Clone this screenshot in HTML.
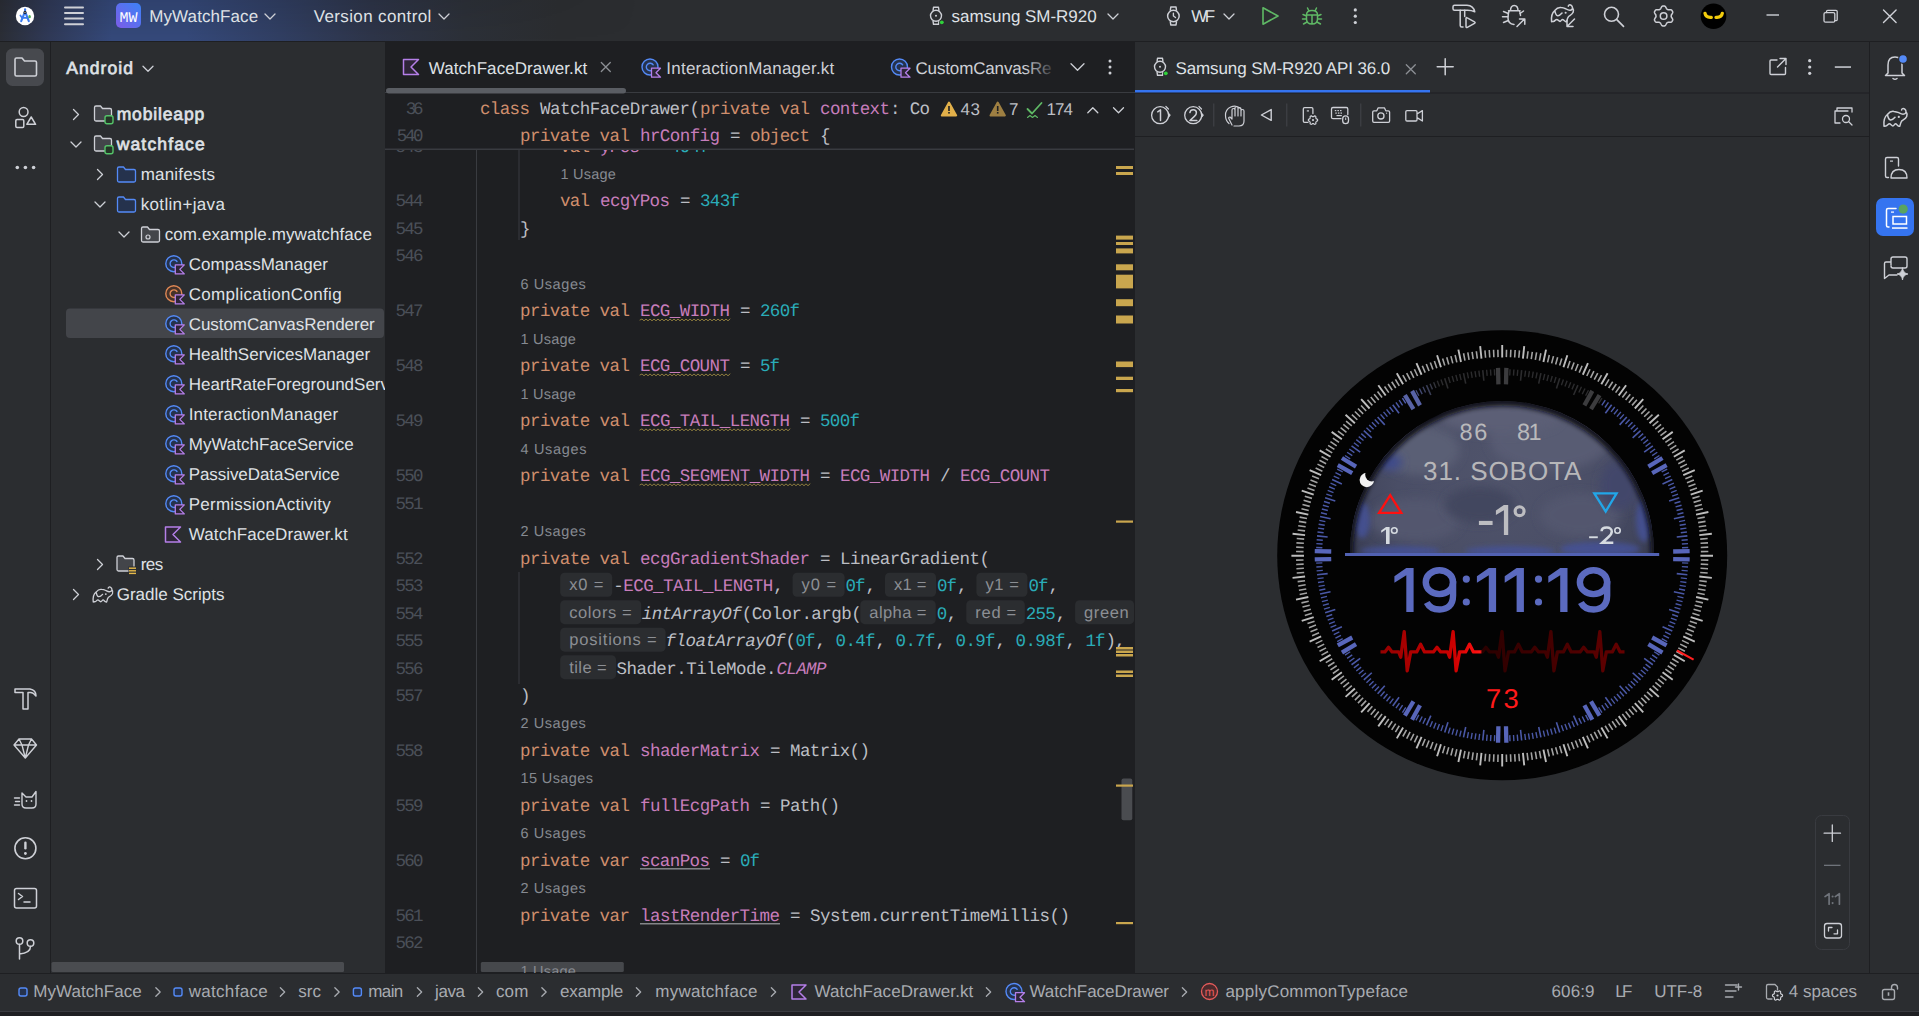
<!DOCTYPE html>
<html><head><meta charset="utf-8"><title>Android Studio</title>
<style>html,body{margin:0;padding:0;background:#2b2d30;overflow:hidden}
#app{position:relative;width:1919px;height:1016px;overflow:hidden}
svg{position:absolute;left:0;top:0;display:block}</style></head>
<body><div id="app"><svg width="1919" height="1016" viewBox="0 0 1919 1016" text-rendering="geometricPrecision">
<defs><linearGradient id="tbg" x1="0" y1="0" x2="620" y2="0" gradientUnits="userSpaceOnUse"><stop offset="0" stop-color="#2b2e36"/><stop offset="0.08" stop-color="#303a58"/><stop offset="0.18" stop-color="#35497a"/><stop offset="0.3" stop-color="#35497a"/><stop offset="0.45" stop-color="#313f63"/><stop offset="0.6" stop-color="#2e3549"/><stop offset="0.75" stop-color="#2c3038"/><stop offset="0.9" stop-color="#2b2d30"/></linearGradient><linearGradient id="tbv" x1="0" y1="0" x2="0" y2="1"><stop offset="0" stop-color="#000" stop-opacity="0.10"/><stop offset="1" stop-color="#000" stop-opacity="0"/></linearGradient><clipPath id="edclip"><rect x="385" y="150" width="750" height="823"/></clipPath><clipPath id="treeclip"><rect x="51" y="42" width="334" height="931"/></clipPath></defs>
<rect x="0" y="0" width="1919" height="1016" fill="#2b2d30" />
<rect x="0" y="0" width="1919" height="41" fill="url(#tbg)" />
<defs><linearGradient id="tbm" x1="0" y1="0" x2="640" y2="0" gradientUnits="userSpaceOnUse"><stop offset="0.6" stop-color="#fff"/><stop offset="1" stop-color="#000"/></linearGradient><mask id="tbmask"><rect x="0" y="0" width="640" height="41" fill="url(#tbm)"/></mask></defs>
<rect x="0" y="0" width="640" height="41" fill="url(#tbv)" mask="url(#tbmask)"/>
<rect x="0" y="41" width="1919" height="1" fill="#1e1f22" />
<rect x="50" y="42" width="1" height="931" fill="#1e1f22" />
<rect x="385" y="42" width="750" height="931" fill="#1e1f22" />
<rect x="1869" y="42" width="1" height="931" fill="#1e1f22" />
<rect x="0" y="973" width="1919" height="1" fill="#1e1f22" />
<rect x="0" y="1011" width="1919" height="1" fill="#393b40" />
<rect x="0" y="1012" width="1919" height="4" fill="#1e1f22" />
<circle cx="25" cy="16" r="9.2" fill="#ffffff"/>
<rect x="24" y="8.3" width="2.1" height="3" rx="1" fill="#3d7cf0"/>
<path d="M24.3 13.5 L21.2 21.2 M25.8 13.5 L28.8 21.2" stroke="#3b7bef" fill="none" stroke-width="2.1" stroke-linecap="round" stroke-linejoin="round" />
<path d="M20.4 15.4 L22.2 17.9 L27.8 17.9" stroke="#3b7bef" fill="none" stroke-width="1.7" stroke-linecap="round" stroke-linejoin="round" />
<circle cx="25" cy="12.4" r="1.6" fill="#1d2430"/><circle cx="25" cy="12.5" r="0.6" fill="#dddddd"/>
<ellipse cx="29.6" cy="16.7" rx="1.3" ry="1.6" fill="#4caf50"/>
<rect x="64" y="6.5" width="20" height="2" rx="1" fill="#ced0d6"/>
<rect x="64" y="12" width="20" height="2" rx="1" fill="#ced0d6"/>
<rect x="64" y="17.5" width="20" height="2" rx="1" fill="#ced0d6"/>
<rect x="64" y="23.3" width="20" height="2" rx="1" fill="#ced0d6"/>
<defs><linearGradient id="mwg" x1="1" y1="0" x2="0" y2="1"><stop offset="0" stop-color="#3b82f6"/><stop offset="1" stop-color="#7c5ce8"/></linearGradient></defs>
<rect x="116" y="3" width="25" height="25" rx="5" fill="url(#mwg)"/>
<text x="119.50" y="22.00" font-family="Liberation Mono" font-size="15" fill="#ffffff" textLength="18.00" lengthAdjust="spacing" >MW</text>
<g transform="translate(936 15.8) scale(1.0)"><circle cx="0" cy="0" r="5.5" fill="none" stroke="#ced0d6" stroke-width="1.4"/><path d="M-3 -5 L-2.5 -8.5 L2.5 -8.5 L3 -5 M-3 5 L-2.5 8.5 L2.5 8.5 L3 5" fill="none" stroke="#ced0d6" stroke-width="1.4" stroke-linejoin="round"/><circle cx="0" cy="0" r="1" fill="#ced0d6"/></g>
<circle cx="941.8" cy="22.3" r="2.6" fill="#2b2d30"/><circle cx="941.8" cy="22.3" r="1.9" fill="#2fd13a"/>
<g transform="translate(1173.4 16) scale(1.05)"><circle cx="0" cy="0" r="5.5" fill="none" stroke="#ced0d6" stroke-width="1.4"/><path d="M-3 -5 L-2.5 -8.5 L2.5 -8.5 L3 -5 M-3 5 L-2.5 8.5 L2.5 8.5 L3 5" fill="none" stroke="#ced0d6" stroke-width="1.4" stroke-linejoin="round"/><path d="M0 -2.8 L0 0 L2 1.5" fill="none" stroke="#ced0d6" stroke-width="1.3" stroke-linecap="round"/></g>
<path d="M1263 7.8 L1278 16 L1263 24.2 Z" stroke="#5fb865" fill="none" stroke-width="1.6" stroke-linecap="round" stroke-linejoin="round" />
<g transform="translate(1312 16) scale(1.0)"><path d="M-5.5 -1 Q-5.5 -5.5 0 -5.5 Q5.5 -5.5 5.5 -1 L5.5 3 Q5.5 8 0 8 Q-5.5 8 -5.5 3 Z M-3 -5 L-4.5 -8 M3 -5 L4.5 -8 M-5.5 0 L-9 -1.5 M5.5 0 L9 -1.5 M-5.5 3 L-9.5 3 M5.5 3 L9.5 3 M-5 6 L-8.5 8 M5 6 L8.5 8 M0 -1 L0 8 M-5.5 -1 L5.5 -1" fill="none" stroke="#5fb865" stroke-width="1.5" stroke-linecap="round" stroke-linejoin="round"/></g>
<circle cx="1355.3" cy="9.899999999999999" r="1.6" fill="#ced0d6"/>
<circle cx="1355.3" cy="16.2" r="1.6" fill="#ced0d6"/>
<circle cx="1355.3" cy="22.5" r="1.6" fill="#ced0d6"/>
<path d="M1454.5 5.2 L1467 5.2 Q1473.5 5.5 1474.8 11.8 Q1471.5 10.3 1467.5 10.3 L1454.5 10.3 Q1453 10.3 1453 8.8 L1453 6.7 Q1453 5.2 1454.5 5.2 Z" stroke="#ced0d6" fill="none" stroke-width="1.5" stroke-linecap="round" stroke-linejoin="round" />
<path d="M1460.2 10.3 L1460.2 25.5 Q1460.2 27 1461.7 27 L1463 27 M1464.7 10.3 L1464.7 16.5" stroke="#ced0d6" fill="none" stroke-width="1.5" stroke-linecap="round" stroke-linejoin="round" />
<path d="M1466 18.5 Q1466 17 1467.3 17.8 L1474.5 21.8 Q1475.8 22.5 1474.5 23.3 L1467.3 27.3 Q1466 28 1466 26.5 Z" stroke="#ced0d6" fill="none" stroke-width="1.5" stroke-linecap="round" stroke-linejoin="round" />
<path d="M1510.5 10.8 Q1510.5 5.5 1514.2 5.5 Q1518 5.5 1518 10.8 M1508.5 10.8 L1520 10.8 M1509 11 Q1508 14 1508 18 Q1508 24 1514 24.5 M1519.5 11 Q1520.5 13 1520.5 15.5" stroke="#ced0d6" fill="none" stroke-width="1.5" stroke-linecap="round" stroke-linejoin="round" />
<path d="M1503.5 11.5 L1508.3 13.5 M1502.5 16.8 L1507.8 16.8 M1503.5 22.5 L1508.3 20.5 M1523.5 11 L1520 13.5" stroke="#ced0d6" fill="none" stroke-width="1.5" stroke-linecap="round" stroke-linejoin="round" />
<path d="M1517 26.5 L1524.5 19 M1519.5 19 L1524.8 19 L1524.8 24.3" stroke="#ced0d6" fill="none" stroke-width="1.5" stroke-linecap="round" stroke-linejoin="round" />
<defs><clipPath id="gsclip"><path d="M1540 0 L1600 0 L1600 18 L1578 18 L1566 30 L1540 30 Z"/></clipPath></defs>
<g clip-path="url(#gsclip)">
<g transform="translate(1562.5 13.3) scale(0.95)"><path d="M-11.5 8.8 C-12 4 -10.5 -1 -8.1 -2.9 C-6 -5.5 -3 -6.3 -1.5 -6 C1 -5.8 2 -5.3 3.6 -4.6 C5.5 -3.6 7 -3 8.1 -3.3 C9.5 -3.5 10.8 -4.5 10.5 -6 C10.3 -8 8.5 -9.2 7.1 -8.8 C6.5 -8.6 6.1 -8 6.1 -7.4 M10.5 -6 C11.5 -4.5 11.8 -2.5 11.2 -1 C10.5 1 8 2.2 6.4 3.3 C5.2 4.5 4.8 6.5 4.3 8.8 L3.5 8.8 C2 8.5 1 6.4 0.2 6.4 C-1 6.4 -1.5 8.5 -2.6 8.5 C-4 8.5 -4.8 6.4 -6 6.4 C-7.5 6.4 -8 8.5 -9.5 8.5 L-11.5 8.8 M-8.1 -2.9 C-7.5 0 -6.8 1.9 -5.5 2.4 C-4 3 -2 1.5 -0.5 -0.2" fill="none" stroke="#ced0d6" stroke-width="1.58" stroke-linejoin="round" stroke-linecap="round"/><circle cx="3.3" cy="-0.5" r="1.1" fill="#ced0d6"/></g>
</g>
<path d="M1574.5 19 L1567.5 26 M1567 20.5 L1567 26.5 L1573 26.5" stroke="#ced0d6" fill="none" stroke-width="1.5" stroke-linecap="round" stroke-linejoin="round" />
<circle cx="1611.5" cy="14.3" r="7" fill="none" stroke="#ced0d6" stroke-width="1.6"/>
<path d="M1616.8 19.6 L1623.5 26.3" stroke="#ced0d6" fill="none" stroke-width="1.7" stroke-linecap="round" stroke-linejoin="round" />
<path d="M1663.60 6.00 L1664.12 6.01 L1664.65 6.05 L1665.13 6.34 L1665.55 6.84 L1665.90 7.40 L1666.21 7.98 L1666.47 8.51 L1666.73 8.97 L1667.10 9.14 L1667.45 9.33 L1667.79 9.54 L1668.13 9.77 L1668.65 9.77 L1669.25 9.73 L1669.89 9.71 L1670.56 9.73 L1671.20 9.84 L1671.69 10.12 L1671.99 10.55 L1672.26 11.00 L1672.51 11.46 L1672.74 11.93 L1672.73 12.49 L1672.51 13.11 L1672.20 13.70 L1671.85 14.25 L1671.52 14.75 L1671.26 15.20 L1671.29 15.60 L1671.30 16.00 L1671.29 16.40 L1671.26 16.80 L1671.52 17.25 L1671.85 17.75 L1672.20 18.30 L1672.51 18.89 L1672.73 19.51 L1672.74 20.07 L1672.51 20.54 L1672.26 21.00 L1671.99 21.45 L1671.69 21.88 L1671.20 22.16 L1670.56 22.27 L1669.89 22.29 L1669.25 22.27 L1668.65 22.23 L1668.13 22.23 L1667.79 22.46 L1667.45 22.67 L1667.10 22.86 L1666.73 23.03 L1666.47 23.49 L1666.21 24.02 L1665.90 24.60 L1665.55 25.16 L1665.13 25.66 L1664.65 25.95 L1664.12 25.99 L1663.60 26.00 L1663.08 25.99 L1662.55 25.95 L1662.07 25.66 L1661.65 25.16 L1661.30 24.60 L1660.99 24.02 L1660.73 23.49 L1660.47 23.03 L1660.10 22.86 L1659.75 22.67 L1659.41 22.46 L1659.07 22.23 L1658.55 22.23 L1657.95 22.27 L1657.31 22.29 L1656.64 22.27 L1656.00 22.16 L1655.51 21.88 L1655.21 21.45 L1654.94 21.00 L1654.69 20.54 L1654.46 20.07 L1654.47 19.51 L1654.69 18.89 L1655.00 18.30 L1655.35 17.75 L1655.68 17.25 L1655.94 16.80 L1655.91 16.40 L1655.90 16.00 L1655.91 15.60 L1655.94 15.20 L1655.68 14.75 L1655.35 14.25 L1655.00 13.70 L1654.69 13.11 L1654.47 12.49 L1654.46 11.93 L1654.69 11.46 L1654.94 11.00 L1655.21 10.55 L1655.51 10.12 L1656.00 9.84 L1656.64 9.73 L1657.31 9.71 L1657.95 9.73 L1658.55 9.77 L1659.07 9.77 L1659.41 9.54 L1659.75 9.33 L1660.10 9.14 L1660.47 8.97 L1660.73 8.51 L1660.99 7.98 L1661.30 7.40 L1661.65 6.84 L1662.07 6.34 L1662.55 6.05 L1663.08 6.01 Z" fill="none" stroke="#ced0d6" stroke-width="1.5" stroke-linejoin="round"/>
<circle cx="1663.6" cy="16" r="3.3" fill="none" stroke="#ced0d6" stroke-width="1.5"/>
<circle cx="1713.5" cy="16.2" r="12.8" fill="#000"/>
<path d="M1705 13.3 Q1705.8 17.8 1711.3 17.3" stroke="#f2cc0c" fill="none" stroke-width="3.3" stroke-linecap="round" stroke-linejoin="round" />
<path d="M1722.3 13.3 Q1721.5 17.8 1716 17.3" stroke="#f2cc0c" fill="none" stroke-width="3.3" stroke-linecap="round" stroke-linejoin="round" />
<rect x="1766.5" y="14.3" width="12.5" height="1.4" fill="#ced0d6" />
<path d="M1826.5 12.5 L1826.5 11.5 Q1826.5 10.3 1827.7 10.3 L1836 10.3 Q1837.2 10.3 1837.2 11.5 L1837.2 19.5 Q1837.2 20.7 1836 20.7 L1835 20.7" stroke="#ced0d6" fill="none" stroke-width="1.3" stroke-linecap="round" stroke-linejoin="round" />
<rect x="1824" y="12.6" width="10.8" height="9.6" rx="1.5" fill="none" stroke="#ced0d6" stroke-width="1.3"/>
<path d="M1883.5 9.899999999999999 L1896.1 22.5 M1896.1 9.899999999999999 L1883.5 22.5" stroke="#ced0d6" fill="none" stroke-width="1.4" stroke-linecap="round" stroke-linejoin="round" />
<text x="149.30" y="22.30" font-family="Liberation Sans" font-size="17" fill="#dfe1e5" textLength="108.80" lengthAdjust="spacing" >MyWatchFace</text>
<path d="M265 14.0 L270 19.0 L275 14.0" stroke="#ced0d6" fill="none" stroke-width="1.3" stroke-linecap="round" stroke-linejoin="round" />
<text x="313.70" y="22.30" font-family="Liberation Sans" font-size="17" fill="#dfe1e5" textLength="117.60" lengthAdjust="spacing" >Version control</text>
<path d="M439 14.0 L444 19.0 L449 14.0" stroke="#ced0d6" fill="none" stroke-width="1.3" stroke-linecap="round" stroke-linejoin="round" />
<text x="951.60" y="22.30" font-family="Liberation Sans" font-size="17" fill="#dfe1e5" textLength="145.00" lengthAdjust="spacing" >samsung SM-R920</text>
<path d="M1108 14.0 L1113 19.0 L1118 14.0" stroke="#ced0d6" fill="none" stroke-width="1.3" stroke-linecap="round" stroke-linejoin="round" />
<text x="1191.20" y="22.30" font-family="Liberation Sans" font-size="17" fill="#dfe1e5" textLength="24.00" lengthAdjust="spacing" >WF</text>
<path d="M1224 14.0 L1229 19.0 L1234 14.0" stroke="#ced0d6" fill="none" stroke-width="1.3" stroke-linecap="round" stroke-linejoin="round" />
<rect x="6" y="48.5" width="38" height="37.5" rx="6.5" fill="#47494e"/>
<path d="M15 59.5 Q15 58 16.5 58 L22 58 L24.5 61 L35 61 Q36.5 61 36.5 62.5 L36.5 74.5 Q36.5 76 35 76 L16.5 76 Q15 76 15 74.5 Z" stroke="#ced0d6" fill="none" stroke-width="1.6" stroke-linecap="round" stroke-linejoin="round" />
<circle cx="23.6" cy="112" r="4.4" fill="none" stroke="#ced0d6" stroke-width="1.5"/>
<rect x="15.8" y="119.6" width="8" height="7.8" rx="1.2" fill="none" stroke="#ced0d6" stroke-width="1.5"/>
<path d="M31.2 117 L35.6 124.3 L26.8 124.3 Z" stroke="#ced0d6" fill="none" stroke-width="1.5" stroke-linecap="round" stroke-linejoin="round" />
<circle cx="17.3" cy="167.5" r="1.8" fill="#ced0d6"/>
<circle cx="25.4" cy="167.5" r="1.8" fill="#ced0d6"/>
<circle cx="33.6" cy="167.5" r="1.8" fill="#ced0d6"/>
<path d="M15 689 L30 689 Q36 690 36 696 Q33 692 30 692.5 L28 692.5 L28 709 L23 709 L23 692.5 L15 692.5 Z" stroke="#ced0d6" fill="none" stroke-width="1.5" stroke-linecap="round" stroke-linejoin="round" />
<path d="M19 739 L31.5 739 L36.5 745 L25.3 758 L14 745 Z M14 745 L36.5 745 M19 739 L22 745 L25.3 758 L28.5 745 L31.5 739" stroke="#ced0d6" fill="none" stroke-width="1.4" stroke-linecap="round" stroke-linejoin="round" />
<path d="M22 793 L26 797 L32 797 L36 791.5 L36 804 Q36 808 32 808 L26 808 Q22 808 22 804 Z M14.5 798 L19.5 798 M15.5 801.5 L19.5 801.5 M14.5 805 L19.5 805" stroke="#ced0d6" fill="none" stroke-width="1.4" stroke-linecap="round" stroke-linejoin="round" />
<circle cx="26.5" cy="801" r="0.9" fill="#ced0d6"/><circle cx="31.5" cy="801" r="0.9" fill="#ced0d6"/>
<circle cx="25.4" cy="848.3" r="10.5" fill="none" stroke="#ced0d6" stroke-width="1.6"/>
<rect x="24.2" y="841.5" width="2.4" height="8" fill="#ced0d6" rx="1.2" />
<circle cx="25.4" cy="853.5" r="1.4" fill="#ced0d6"/>
<rect x="14.5" y="888.5" width="22" height="19.5" rx="2" fill="none" stroke="#ced0d6" stroke-width="1.5"/>
<path d="M18.5 893.5 L22.5 896.5 L18.5 899.5 M24 902 L30 902" stroke="#ced0d6" fill="none" stroke-width="1.5" stroke-linecap="round" stroke-linejoin="round" />
<circle cx="19.5" cy="941" r="3.3" fill="none" stroke="#ced0d6" stroke-width="1.5"/>
<circle cx="30.5" cy="943" r="3.3" fill="none" stroke="#ced0d6" stroke-width="1.5"/>
<path d="M19.5 944.5 L19.5 959 M19.5 954 Q30.5 953 30.5 946.5" stroke="#ced0d6" fill="none" stroke-width="1.5" stroke-linecap="round" stroke-linejoin="round" />
<text x="66.20" y="74.20" font-family="Liberation Sans" font-size="17.5" fill="#dfe1e5" textLength="66.70" lengthAdjust="spacing" stroke="#dfe1e5" stroke-width="0.7">Android</text>
<path d="M143 66.3 L148 71.3 L153 66.3" stroke="#ced0d6" fill="none" stroke-width="1.3" stroke-linecap="round" stroke-linejoin="round" />
<g clip-path="url(#treeclip)">
<rect x="66" y="308.5" width="318" height="29.5" fill="#43454a" rx="4" />
<path d="M73.5 109.5 L78.5 114.5 L73.5 119.5" stroke="#ced0d6" fill="none" stroke-width="1.3" stroke-linecap="round" stroke-linejoin="round" />
<path d="M96.0 106.0 L100.5 106.0 L102.5 108.5 L110.0 108.5 Q111.5 108.5 111.5 110.0 L111.5 119.5 Q111.5 121.0 110.0 121.0 L96.0 121.0 Q94.5 121.0 94.5 119.5 L94.5 107.5 Q94.5 106.0 96.0 106.0 Z" stroke="#ced0d6" fill="#43454a" stroke-width="1.3" stroke-linecap="round" stroke-linejoin="round" />
<rect x="105.0" y="115.7" width="8" height="8" rx="2" fill="#253627" stroke="#55c46a" stroke-width="1.4"/>
<text x="116.70" y="120.00" font-family="Liberation Sans" font-size="17.5" fill="#dfe1e5" textLength="87.50" lengthAdjust="spacing" stroke="#dfe1e5" stroke-width="0.7">mobileapp</text>
<path d="M71 142.0 L76 147.0 L81 142.0" stroke="#ced0d6" fill="none" stroke-width="1.3" stroke-linecap="round" stroke-linejoin="round" />
<path d="M96.0 136.0 L100.5 136.0 L102.5 138.5 L110.0 138.5 Q111.5 138.5 111.5 140.0 L111.5 149.5 Q111.5 151.0 110.0 151.0 L96.0 151.0 Q94.5 151.0 94.5 149.5 L94.5 137.5 Q94.5 136.0 96.0 136.0 Z" stroke="#ced0d6" fill="#43454a" stroke-width="1.3" stroke-linecap="round" stroke-linejoin="round" />
<rect x="105.0" y="145.7" width="8" height="8" rx="2" fill="#253627" stroke="#55c46a" stroke-width="1.4"/>
<text x="116.70" y="150.00" font-family="Liberation Sans" font-size="17.5" fill="#dfe1e5" textLength="88.00" lengthAdjust="spacing" stroke="#dfe1e5" stroke-width="0.7">watchface</text>
<path d="M97.5 169.5 L102.5 174.5 L97.5 179.5" stroke="#ced0d6" fill="none" stroke-width="1.3" stroke-linecap="round" stroke-linejoin="round" />
<path d="M119.0 167.0 L123.5 167.0 L125.5 169.5 L134.0 169.5 Q135.5 169.5 135.5 171.0 L135.5 180.5 Q135.5 182.0 134.0 182.0 L119.0 182.0 Q117.5 182.0 117.5 180.5 L117.5 168.5 Q117.5 167.0 119.0 167.0 Z" stroke="#548af7" fill="#25324d" stroke-width="1.3" stroke-linecap="round" stroke-linejoin="round" />
<text x="140.70" y="180.00" font-family="Liberation Sans" font-size="17" fill="#dfe1e5" textLength="74.20" lengthAdjust="spacing" >manifests</text>
<path d="M95 202.0 L100 207.0 L105 202.0" stroke="#ced0d6" fill="none" stroke-width="1.3" stroke-linecap="round" stroke-linejoin="round" />
<path d="M119.0 197.0 L123.5 197.0 L125.5 199.5 L134.0 199.5 Q135.5 199.5 135.5 201.0 L135.5 210.5 Q135.5 212.0 134.0 212.0 L119.0 212.0 Q117.5 212.0 117.5 210.5 L117.5 198.5 Q117.5 197.0 119.0 197.0 Z" stroke="#548af7" fill="#25324d" stroke-width="1.3" stroke-linecap="round" stroke-linejoin="round" />
<text x="140.70" y="210.00" font-family="Liberation Sans" font-size="17" fill="#dfe1e5" textLength="84.20" lengthAdjust="spacing" >kotlin+java</text>
<path d="M119 232.0 L124 237.0 L129 232.0" stroke="#ced0d6" fill="none" stroke-width="1.3" stroke-linecap="round" stroke-linejoin="round" />
<path d="M143.0 227.0 L147.5 227.0 L149.5 229.5 L158.0 229.5 Q159.5 229.5 159.5 231.0 L159.5 240.5 Q159.5 242.0 158.0 242.0 L143.0 242.0 Q141.5 242.0 141.5 240.5 L141.5 228.5 Q141.5 227.0 143.0 227.0 Z" stroke="#ced0d6" fill="#43454a" stroke-width="1.3" stroke-linecap="round" stroke-linejoin="round" />
<circle cx="148.0" cy="237.0" r="2" fill="none" stroke="#ced0d6" stroke-width="1.2"/>
<text x="164.70" y="240.00" font-family="Liberation Sans" font-size="17" fill="#dfe1e5" textLength="207.20" lengthAdjust="spacing" >com.example.mywatchface</text>
<circle cx="173.8" cy="263.7" r="8" fill="#25324d" stroke="#548af7" stroke-width="1.4"/>
<path d="M177.0 261.5 A3.8 3.8 0 1 0 177.0 265.9" stroke="#548af7" fill="none" stroke-width="1.4" stroke-linecap="round" stroke-linejoin="round" />
<path d="M175.3 264.9 L184.3 264.9 L179.8 269.4 L184.3 273.9 L175.3 273.9 Z" stroke="#b57fe8" fill="#2e2538" stroke-width="1.3" stroke-linecap="round" stroke-linejoin="round" />
<text x="188.70" y="270.00" font-family="Liberation Sans" font-size="17" fill="#dfe1e5" textLength="139.20" lengthAdjust="spacing" >CompassManager</text>
<circle cx="173.8" cy="293.7" r="8" fill="#45322a" stroke="#e08855" stroke-width="1.4"/>
<path d="M177.0 291.5 A3.8 3.8 0 1 0 177.0 295.9" stroke="#e08855" fill="none" stroke-width="1.4" stroke-linecap="round" stroke-linejoin="round" />
<path d="M175.3 294.9 L184.3 294.9 L179.8 299.4 L184.3 303.9 L175.3 303.9 Z" stroke="#b57fe8" fill="#2e2538" stroke-width="1.3" stroke-linecap="round" stroke-linejoin="round" />
<text x="188.70" y="300.00" font-family="Liberation Sans" font-size="17" fill="#dfe1e5" textLength="152.90" lengthAdjust="spacing" >ComplicationConfig</text>
<circle cx="173.8" cy="323.7" r="8" fill="#25324d" stroke="#548af7" stroke-width="1.4"/>
<path d="M177.0 321.5 A3.8 3.8 0 1 0 177.0 325.9" stroke="#548af7" fill="none" stroke-width="1.4" stroke-linecap="round" stroke-linejoin="round" />
<path d="M175.3 324.9 L184.3 324.9 L179.8 329.4 L184.3 333.9 L175.3 333.9 Z" stroke="#b57fe8" fill="#2e2538" stroke-width="1.3" stroke-linecap="round" stroke-linejoin="round" />
<text x="188.70" y="330.00" font-family="Liberation Sans" font-size="17" fill="#dfe1e5" textLength="186.00" lengthAdjust="spacing" >CustomCanvasRenderer</text>
<circle cx="173.8" cy="353.7" r="8" fill="#25324d" stroke="#548af7" stroke-width="1.4"/>
<path d="M177.0 351.5 A3.8 3.8 0 1 0 177.0 355.9" stroke="#548af7" fill="none" stroke-width="1.4" stroke-linecap="round" stroke-linejoin="round" />
<path d="M175.3 354.9 L184.3 354.9 L179.8 359.4 L184.3 363.9 L175.3 363.9 Z" stroke="#b57fe8" fill="#2e2538" stroke-width="1.3" stroke-linecap="round" stroke-linejoin="round" />
<text x="188.70" y="360.00" font-family="Liberation Sans" font-size="17" fill="#dfe1e5" textLength="181.40" lengthAdjust="spacing" >HealthServicesManager</text>
<circle cx="173.8" cy="383.7" r="8" fill="#25324d" stroke="#548af7" stroke-width="1.4"/>
<path d="M177.0 381.5 A3.8 3.8 0 1 0 177.0 385.9" stroke="#548af7" fill="none" stroke-width="1.4" stroke-linecap="round" stroke-linejoin="round" />
<path d="M175.3 384.9 L184.3 384.9 L179.8 389.4 L184.3 393.9 L175.3 393.9 Z" stroke="#b57fe8" fill="#2e2538" stroke-width="1.3" stroke-linecap="round" stroke-linejoin="round" />
<text x="188.70" y="390.00" font-family="Liberation Sans" font-size="17" fill="#dfe1e5" textLength="222.00" lengthAdjust="spacing" >HeartRateForegroundService</text>
<circle cx="173.8" cy="413.7" r="8" fill="#25324d" stroke="#548af7" stroke-width="1.4"/>
<path d="M177.0 411.5 A3.8 3.8 0 1 0 177.0 415.9" stroke="#548af7" fill="none" stroke-width="1.4" stroke-linecap="round" stroke-linejoin="round" />
<path d="M175.3 414.9 L184.3 414.9 L179.8 419.4 L184.3 423.9 L175.3 423.9 Z" stroke="#b57fe8" fill="#2e2538" stroke-width="1.3" stroke-linecap="round" stroke-linejoin="round" />
<text x="188.70" y="420.00" font-family="Liberation Sans" font-size="17" fill="#dfe1e5" textLength="149.40" lengthAdjust="spacing" >InteractionManager</text>
<circle cx="173.8" cy="443.7" r="8" fill="#25324d" stroke="#548af7" stroke-width="1.4"/>
<path d="M177.0 441.5 A3.8 3.8 0 1 0 177.0 445.9" stroke="#548af7" fill="none" stroke-width="1.4" stroke-linecap="round" stroke-linejoin="round" />
<path d="M175.3 444.9 L184.3 444.9 L179.8 449.4 L184.3 453.9 L175.3 453.9 Z" stroke="#b57fe8" fill="#2e2538" stroke-width="1.3" stroke-linecap="round" stroke-linejoin="round" />
<text x="188.70" y="450.00" font-family="Liberation Sans" font-size="17" fill="#dfe1e5" textLength="165.00" lengthAdjust="spacing" >MyWatchFaceService</text>
<circle cx="173.8" cy="473.7" r="8" fill="#25324d" stroke="#548af7" stroke-width="1.4"/>
<path d="M177.0 471.5 A3.8 3.8 0 1 0 177.0 475.9" stroke="#548af7" fill="none" stroke-width="1.4" stroke-linecap="round" stroke-linejoin="round" />
<path d="M175.3 474.9 L184.3 474.9 L179.8 479.4 L184.3 483.9 L175.3 483.9 Z" stroke="#b57fe8" fill="#2e2538" stroke-width="1.3" stroke-linecap="round" stroke-linejoin="round" />
<text x="188.70" y="480.00" font-family="Liberation Sans" font-size="17" fill="#dfe1e5" textLength="151.00" lengthAdjust="spacing" >PassiveDataService</text>
<circle cx="173.8" cy="503.7" r="8" fill="#25324d" stroke="#548af7" stroke-width="1.4"/>
<path d="M177.0 501.5 A3.8 3.8 0 1 0 177.0 505.9" stroke="#548af7" fill="none" stroke-width="1.4" stroke-linecap="round" stroke-linejoin="round" />
<path d="M175.3 504.9 L184.3 504.9 L179.8 509.4 L184.3 513.9 L175.3 513.9 Z" stroke="#b57fe8" fill="#2e2538" stroke-width="1.3" stroke-linecap="round" stroke-linejoin="round" />
<text x="188.70" y="510.00" font-family="Liberation Sans" font-size="17" fill="#dfe1e5" textLength="142.00" lengthAdjust="spacing" >PermissionActivity</text>
<path d="M165.5 527.0 L180.5 527.0 L173.0 534.5 L180.5 542.0 L165.5 542.0 Z" stroke="#b57fe8" fill="#2e2538" stroke-width="1.5" stroke-linecap="round" stroke-linejoin="round" />
<text x="188.70" y="540.00" font-family="Liberation Sans" font-size="17" fill="#dfe1e5" textLength="159.00" lengthAdjust="spacing" >WatchFaceDrawer.kt</text>
<path d="M97.5 559.5 L102.5 564.5 L97.5 569.5" stroke="#ced0d6" fill="none" stroke-width="1.3" stroke-linecap="round" stroke-linejoin="round" />
<path d="M118.5 556.0 L123.0 556.0 L125.0 558.5 L132.5 558.5 Q134.0 558.5 134.0 560.0 L134.0 569.5 Q134.0 571.0 132.5 571.0 L118.5 571.0 Q117.0 571.0 117.0 569.5 L117.0 557.5 Q117.0 556.0 118.5 556.0 Z" stroke="#ced0d6" fill="#43454a" stroke-width="1.3" stroke-linecap="round" stroke-linejoin="round" />
<rect x="128.5" y="566.5" width="8" height="8" fill="#2b2d30"/>
<rect x="129.0" y="567.5" width="7" height="1.4" fill="#e5b94a"/>
<rect x="129.0" y="570.1" width="7" height="1.4" fill="#e5b94a"/>
<rect x="129.0" y="572.7" width="7" height="1.4" fill="#e5b94a"/>
<text x="140.70" y="570.00" font-family="Liberation Sans" font-size="17" fill="#dfe1e5" textLength="22.50" lengthAdjust="spacing" >res</text>
<path d="M73.5 589.5 L78.5 594.5 L73.5 599.5" stroke="#ced0d6" fill="none" stroke-width="1.3" stroke-linecap="round" stroke-linejoin="round" />
<g transform="translate(103.0 594.5) scale(0.85)"><path d="M-11.5 8.8 C-12 4 -10.5 -1 -8.1 -2.9 C-6 -5.5 -3 -6.3 -1.5 -6 C1 -5.8 2 -5.3 3.6 -4.6 C5.5 -3.6 7 -3 8.1 -3.3 C9.5 -3.5 10.8 -4.5 10.5 -6 C10.3 -8 8.5 -9.2 7.1 -8.8 C6.5 -8.6 6.1 -8 6.1 -7.4 M10.5 -6 C11.5 -4.5 11.8 -2.5 11.2 -1 C10.5 1 8 2.2 6.4 3.3 C5.2 4.5 4.8 6.5 4.3 8.8 L3.5 8.8 C2 8.5 1 6.4 0.2 6.4 C-1 6.4 -1.5 8.5 -2.6 8.5 C-4 8.5 -4.8 6.4 -6 6.4 C-7.5 6.4 -8 8.5 -9.5 8.5 L-11.5 8.8 M-8.1 -2.9 C-7.5 0 -6.8 1.9 -5.5 2.4 C-4 3 -2 1.5 -0.5 -0.2" fill="none" stroke="#ced0d6" stroke-width="1.53" stroke-linejoin="round" stroke-linecap="round"/><circle cx="3.3" cy="-0.5" r="1.1" fill="#ced0d6"/></g>
<text x="116.70" y="600.00" font-family="Liberation Sans" font-size="17" fill="#dfe1e5" textLength="107.70" lengthAdjust="spacing" >Gradle Scripts</text>
</g>
<rect x="51.5" y="962" width="292.5" height="10" fill="#4a4c50" rx="1.5" />
<path d="M403.5 59.5 L418.5 59.5 L411.0 67.0 L418.5 74.5 L403.5 74.5 Z" stroke="#b57fe8" fill="#2e2538" stroke-width="1.5" stroke-linecap="round" stroke-linejoin="round" />
<text x="428.70" y="74.30" font-family="Liberation Sans" font-size="17" fill="#dfe1e5" textLength="158.50" lengthAdjust="spacing" >WatchFaceDrawer.kt</text>
<path d="M601.3 62.5 L610.3 71.5 M610.3 62.5 L601.3 71.5" stroke="#8c8f94" fill="none" stroke-width="1.3" stroke-linecap="round" stroke-linejoin="round" />
<circle cx="650" cy="67" r="8" fill="#25324d" stroke="#548af7" stroke-width="1.4"/>
<path d="M653.2 64.8 A3.8 3.8 0 1 0 653.2 69.2" stroke="#548af7" fill="none" stroke-width="1.4" stroke-linecap="round" stroke-linejoin="round" />
<path d="M651.5 68.2 L660.5 68.2 L656.0 72.7 L660.5 77.2 L651.5 77.2 Z" stroke="#b57fe8" fill="#2e2538" stroke-width="1.3" stroke-linecap="round" stroke-linejoin="round" />
<text x="666.30" y="74.30" font-family="Liberation Sans" font-size="17" fill="#ced0d6" textLength="168.00" lengthAdjust="spacing" >InteractionManager.kt</text>
<circle cx="899.5" cy="67" r="8" fill="#25324d" stroke="#548af7" stroke-width="1.4"/>
<path d="M902.7 64.8 A3.8 3.8 0 1 0 902.7 69.2" stroke="#548af7" fill="none" stroke-width="1.4" stroke-linecap="round" stroke-linejoin="round" />
<path d="M901.0 68.2 L910.0 68.2 L905.5 72.7 L910.0 77.2 L901.0 77.2 Z" stroke="#b57fe8" fill="#2e2538" stroke-width="1.3" stroke-linecap="round" stroke-linejoin="round" />
<defs><linearGradient id="fadeTab" x1="0" x2="1"><stop offset="0.8" stop-color="#ced0d6"/><stop offset="1" stop-color="#ced0d6" stop-opacity="0.2"/></linearGradient></defs>
<text x="915.50" y="74.30" font-family="Liberation Sans" font-size="17" fill="url(#fadeTab)" textLength="136.00" lengthAdjust="spacing" >CustomCanvasRe</text>
<path d="M1071.0 63.75 L1077.5 70.25 L1084.0 63.75" stroke="#ced0d6" fill="none" stroke-width="1.3" stroke-linecap="round" stroke-linejoin="round" />
<circle cx="1110" cy="61" r="1.5" fill="#ced0d6"/>
<circle cx="1110" cy="67" r="1.5" fill="#ced0d6"/>
<circle cx="1110" cy="73" r="1.5" fill="#ced0d6"/>
<rect x="385" y="92" width="750" height="1" fill="#393b40" />
<rect x="386" y="88" width="240" height="5.5" fill="#5a5d63" rx="2.75" />
<path d="M949 102.5 L956.2 115.5 L941.8 115.5 Z" stroke="#e2b04a" fill="#e2b04a" stroke-width="2" stroke-linecap="round" stroke-linejoin="round" />
<rect x="948.2" y="106" width="1.6" height="5" fill="#1e1f22" />
<rect x="948.2" y="112" width="1.6" height="1.6" fill="#1e1f22" />
<path d="M997.7 102.5 L1004.9000000000001 115.5 L990.5 115.5 Z" stroke="#9e7f42" fill="#9e7f42" stroke-width="2" stroke-linecap="round" stroke-linejoin="round" />
<rect x="996.9000000000001" y="106" width="1.6" height="5" fill="#1e1f22" />
<rect x="996.9000000000001" y="112" width="1.6" height="1.6" fill="#1e1f22" />
<text x="960.50" y="115.30" font-family="Liberation Sans" font-size="17" fill="#bcbec4" textLength="19.50" lengthAdjust="spacing" >43</text>
<text x="1009.00" y="115.30" font-family="Liberation Sans" font-size="17" fill="#bcbec4" textLength="8.50" lengthAdjust="spacing" >7</text>
<path d="M1027.5 109 L1032 113.5 L1041.5 103" stroke="#5fb865" fill="none" stroke-width="1.8" stroke-linecap="round" stroke-linejoin="round" />
<path d="M1027.5 117.5 L1030 115.5 L1032.5 117.5 L1035 115.5 L1037.5 117.5" stroke="#5fb865" fill="none" stroke-width="1.1" stroke-linecap="round" stroke-linejoin="round" />
<text x="1046.50" y="115.30" font-family="Liberation Sans" font-size="17" fill="#bcbec4" textLength="26.50" lengthAdjust="spacing" >174</text>
<path d="M1087.8 112.8 L1092.8 107.8 L1097.8 112.8" stroke="#ced0d6" fill="none" stroke-width="1.3" stroke-linecap="round" stroke-linejoin="round" />
<path d="M1113.5 107.8 L1118.5 112.8 L1123.5 107.8" stroke="#ced0d6" fill="none" stroke-width="1.3" stroke-linecap="round" stroke-linejoin="round" />
<text x="423.50" y="113.70" font-family="Liberation Mono" font-size="17.5" fill="#4b5059" textLength="17.80" lengthAdjust="spacing" text-anchor="end" >36</text>
<text x="480.00" y="113.90" font-family="Liberation Mono" font-size="17.5" fill="#cf8e6d" textLength="50.00" lengthAdjust="spacing" >class</text>
<text x="540.00" y="113.90" font-family="Liberation Mono" font-size="17.5" fill="#bcbec4" textLength="160.00" lengthAdjust="spacing" >WatchFaceDrawer(</text>
<text x="700.00" y="113.90" font-family="Liberation Mono" font-size="17.5" fill="#cf8e6d" textLength="110.00" lengthAdjust="spacing" >private val</text>
<text x="820.00" y="113.90" font-family="Liberation Mono" font-size="17.5" fill="#c77dbb" textLength="70.00" lengthAdjust="spacing" >context</text>
<text x="890.00" y="113.90" font-family="Liberation Mono" font-size="17.5" fill="#bcbec4" textLength="40.00" lengthAdjust="spacing" >: Co</text>
<text x="423.50" y="141.20" font-family="Liberation Mono" font-size="17.5" fill="#4b5059" textLength="26.70" lengthAdjust="spacing" text-anchor="end" >540</text>
<text x="520.00" y="141.20" font-family="Liberation Mono" font-size="17.5" fill="#cf8e6d" textLength="110.00" lengthAdjust="spacing" >private val</text>
<text x="640.00" y="141.20" font-family="Liberation Mono" font-size="17.5" fill="#c77dbb" textLength="80.00" lengthAdjust="spacing" >hrConfig</text>
<text x="730.00" y="141.20" font-family="Liberation Mono" font-size="17.5" fill="#bcbec4" textLength="10.00" lengthAdjust="spacing" >=</text>
<text x="750.00" y="141.20" font-family="Liberation Mono" font-size="17.5" fill="#cf8e6d" textLength="60.00" lengthAdjust="spacing" >object</text>
<text x="820.00" y="141.20" font-family="Liberation Mono" font-size="17.5" fill="#bcbec4" textLength="10.00" lengthAdjust="spacing" >{</text>
<rect x="385" y="148.5" width="749" height="1.5" fill="#393b40" />
<g clip-path="url(#edclip)">
<rect x="480.8" y="962" width="143" height="10" fill="#46484c" rx="1.5" />
<rect x="476" y="150" width="1" height="823" fill="#393b40" />
<rect x="518.5" y="150" width="1" height="90" fill="#393b40" />
<rect x="518.5" y="572" width="1" height="112" fill="#393b40" />
<text x="423.50" y="151.52" font-family="Liberation Mono" font-size="17.5" fill="#4b5059" textLength="27.90" lengthAdjust="spacing" text-anchor="end" >543</text>
<text x="560.00" y="151.52" font-family="Liberation Mono" font-size="17.5" fill="#cf8e6d" textLength="30.00" lengthAdjust="spacing" >val</text>
<text x="600.00" y="151.52" font-family="Liberation Mono" font-size="17.5" fill="#c77dbb" textLength="40.00" lengthAdjust="spacing" >yPos</text>
<text x="650.00" y="151.52" font-family="Liberation Mono" font-size="17.5" fill="#bcbec4" textLength="10.00" lengthAdjust="spacing" >=</text>
<text x="670.00" y="151.52" font-family="Liberation Mono" font-size="17.5" fill="#2aacb8" textLength="40.00" lengthAdjust="spacing" >404f</text>
<text x="560.50" y="178.80" font-family="Liberation Sans" font-size="14.5" fill="#868a91" textLength="55.40" lengthAdjust="spacing" >1 Usage</text>
<text x="423.50" y="206.48" font-family="Liberation Mono" font-size="17.5" fill="#4b5059" textLength="27.90" lengthAdjust="spacing" text-anchor="end" >544</text>
<text x="560.00" y="206.48" font-family="Liberation Mono" font-size="17.5" fill="#cf8e6d" textLength="30.00" lengthAdjust="spacing" >val</text>
<text x="600.00" y="206.48" font-family="Liberation Mono" font-size="17.5" fill="#c77dbb" textLength="70.00" lengthAdjust="spacing" >ecgYPos</text>
<text x="680.00" y="206.48" font-family="Liberation Mono" font-size="17.5" fill="#bcbec4" textLength="10.00" lengthAdjust="spacing" >=</text>
<text x="700.00" y="206.48" font-family="Liberation Mono" font-size="17.5" fill="#2aacb8" textLength="40.00" lengthAdjust="spacing" >343f</text>
<text x="423.50" y="233.96" font-family="Liberation Mono" font-size="17.5" fill="#4b5059" textLength="27.90" lengthAdjust="spacing" text-anchor="end" >545</text>
<text x="520.00" y="233.96" font-family="Liberation Mono" font-size="17.5" fill="#bcbec4" textLength="10.00" lengthAdjust="spacing" >}</text>
<text x="423.50" y="261.44" font-family="Liberation Mono" font-size="17.5" fill="#4b5059" textLength="27.90" lengthAdjust="spacing" text-anchor="end" >546</text>
<text x="520.50" y="288.72" font-family="Liberation Sans" font-size="14.5" fill="#868a91" textLength="65.30" lengthAdjust="spacing" >6 Usages</text>
<text x="423.50" y="316.40" font-family="Liberation Mono" font-size="17.5" fill="#4b5059" textLength="27.90" lengthAdjust="spacing" text-anchor="end" >547</text>
<text x="520.00" y="316.40" font-family="Liberation Mono" font-size="17.5" fill="#cf8e6d" textLength="110.00" lengthAdjust="spacing" >private val</text>
<text x="640.00" y="316.40" font-family="Liberation Mono" font-size="17.5" fill="#c77dbb" textLength="90.00" lengthAdjust="spacing" >ECG_WIDTH</text>
<path d="M640.0 320.0 L642.0 319.0 L644.0 320.79999999999995 L646.0 319.0 L648.0 320.79999999999995 L650.0 319.0 L652.0 320.79999999999995 L654.0 319.0 L656.0 320.79999999999995 L658.0 319.0 L660.0 320.79999999999995 L662.0 319.0 L664.0 320.79999999999995 L666.0 319.0 L668.0 320.79999999999995 L670.0 319.0 L672.0 320.79999999999995 L674.0 319.0 L676.0 320.79999999999995 L678.0 319.0 L680.0 320.79999999999995 L682.0 319.0 L684.0 320.79999999999995 L686.0 319.0 L688.0 320.79999999999995 L690.0 319.0 L692.0 320.79999999999995 L694.0 319.0 L696.0 320.79999999999995 L698.0 319.0 L700.0 320.79999999999995 L702.0 319.0 L704.0 320.79999999999995 L706.0 319.0 L708.0 320.79999999999995 L710.0 319.0 L712.0 320.79999999999995 L714.0 319.0 L716.0 320.79999999999995 L718.0 319.0 L720.0 320.79999999999995 L722.0 319.0 L724.0 320.79999999999995 L726.0 319.0 L728.0 320.79999999999995 L730.0 319.0" stroke="#8f7e3e" fill="none" stroke-width="1.0" stroke-linecap="round" stroke-linejoin="round" stroke-linecap="butt"/>
<text x="740.00" y="316.40" font-family="Liberation Mono" font-size="17.5" fill="#bcbec4" textLength="10.00" lengthAdjust="spacing" >=</text>
<text x="760.00" y="316.40" font-family="Liberation Mono" font-size="17.5" fill="#2aacb8" textLength="40.00" lengthAdjust="spacing" >260f</text>
<text x="520.50" y="343.68" font-family="Liberation Sans" font-size="14.5" fill="#868a91" textLength="55.40" lengthAdjust="spacing" >1 Usage</text>
<text x="423.50" y="371.36" font-family="Liberation Mono" font-size="17.5" fill="#4b5059" textLength="27.90" lengthAdjust="spacing" text-anchor="end" >548</text>
<text x="520.00" y="371.36" font-family="Liberation Mono" font-size="17.5" fill="#cf8e6d" textLength="110.00" lengthAdjust="spacing" >private val</text>
<text x="640.00" y="371.36" font-family="Liberation Mono" font-size="17.5" fill="#c77dbb" textLength="90.00" lengthAdjust="spacing" >ECG_COUNT</text>
<path d="M640.0 374.96000000000004 L642.0 373.96000000000004 L644.0 375.76 L646.0 373.96000000000004 L648.0 375.76 L650.0 373.96000000000004 L652.0 375.76 L654.0 373.96000000000004 L656.0 375.76 L658.0 373.96000000000004 L660.0 375.76 L662.0 373.96000000000004 L664.0 375.76 L666.0 373.96000000000004 L668.0 375.76 L670.0 373.96000000000004 L672.0 375.76 L674.0 373.96000000000004 L676.0 375.76 L678.0 373.96000000000004 L680.0 375.76 L682.0 373.96000000000004 L684.0 375.76 L686.0 373.96000000000004 L688.0 375.76 L690.0 373.96000000000004 L692.0 375.76 L694.0 373.96000000000004 L696.0 375.76 L698.0 373.96000000000004 L700.0 375.76 L702.0 373.96000000000004 L704.0 375.76 L706.0 373.96000000000004 L708.0 375.76 L710.0 373.96000000000004 L712.0 375.76 L714.0 373.96000000000004 L716.0 375.76 L718.0 373.96000000000004 L720.0 375.76 L722.0 373.96000000000004 L724.0 375.76 L726.0 373.96000000000004 L728.0 375.76 L730.0 373.96000000000004" stroke="#8f7e3e" fill="none" stroke-width="1.0" stroke-linecap="round" stroke-linejoin="round" stroke-linecap="butt"/>
<text x="740.00" y="371.36" font-family="Liberation Mono" font-size="17.5" fill="#bcbec4" textLength="10.00" lengthAdjust="spacing" >=</text>
<text x="760.00" y="371.36" font-family="Liberation Mono" font-size="17.5" fill="#2aacb8" textLength="20.00" lengthAdjust="spacing" >5f</text>
<text x="520.50" y="398.64" font-family="Liberation Sans" font-size="14.5" fill="#868a91" textLength="55.40" lengthAdjust="spacing" >1 Usage</text>
<text x="423.50" y="426.32" font-family="Liberation Mono" font-size="17.5" fill="#4b5059" textLength="27.90" lengthAdjust="spacing" text-anchor="end" >549</text>
<text x="520.00" y="426.32" font-family="Liberation Mono" font-size="17.5" fill="#cf8e6d" textLength="110.00" lengthAdjust="spacing" >private val</text>
<text x="640.00" y="426.32" font-family="Liberation Mono" font-size="17.5" fill="#c77dbb" textLength="150.00" lengthAdjust="spacing" >ECG_TAIL_LENGTH</text>
<path d="M640.0 429.92 L642.0 428.92 L644.0 430.71999999999997 L646.0 428.92 L648.0 430.71999999999997 L650.0 428.92 L652.0 430.71999999999997 L654.0 428.92 L656.0 430.71999999999997 L658.0 428.92 L660.0 430.71999999999997 L662.0 428.92 L664.0 430.71999999999997 L666.0 428.92 L668.0 430.71999999999997 L670.0 428.92 L672.0 430.71999999999997 L674.0 428.92 L676.0 430.71999999999997 L678.0 428.92 L680.0 430.71999999999997 L682.0 428.92 L684.0 430.71999999999997 L686.0 428.92 L688.0 430.71999999999997 L690.0 428.92 L692.0 430.71999999999997 L694.0 428.92 L696.0 430.71999999999997 L698.0 428.92 L700.0 430.71999999999997 L702.0 428.92 L704.0 430.71999999999997 L706.0 428.92 L708.0 430.71999999999997 L710.0 428.92 L712.0 430.71999999999997 L714.0 428.92 L716.0 430.71999999999997 L718.0 428.92 L720.0 430.71999999999997 L722.0 428.92 L724.0 430.71999999999997 L726.0 428.92 L728.0 430.71999999999997 L730.0 428.92 L732.0 430.71999999999997 L734.0 428.92 L736.0 430.71999999999997 L738.0 428.92 L740.0 430.71999999999997 L742.0 428.92 L744.0 430.71999999999997 L746.0 428.92 L748.0 430.71999999999997 L750.0 428.92 L752.0 430.71999999999997 L754.0 428.92 L756.0 430.71999999999997 L758.0 428.92 L760.0 430.71999999999997 L762.0 428.92 L764.0 430.71999999999997 L766.0 428.92 L768.0 430.71999999999997 L770.0 428.92 L772.0 430.71999999999997 L774.0 428.92 L776.0 430.71999999999997 L778.0 428.92 L780.0 430.71999999999997 L782.0 428.92 L784.0 430.71999999999997 L786.0 428.92 L788.0 430.71999999999997 L790.0 428.92" stroke="#8f7e3e" fill="none" stroke-width="1.0" stroke-linecap="round" stroke-linejoin="round" stroke-linecap="butt"/>
<text x="800.00" y="426.32" font-family="Liberation Mono" font-size="17.5" fill="#bcbec4" textLength="10.00" lengthAdjust="spacing" >=</text>
<text x="820.00" y="426.32" font-family="Liberation Mono" font-size="17.5" fill="#2aacb8" textLength="40.00" lengthAdjust="spacing" >500f</text>
<text x="520.50" y="453.60" font-family="Liberation Sans" font-size="14.5" fill="#868a91" textLength="66.00" lengthAdjust="spacing" >4 Usages</text>
<text x="423.50" y="481.28" font-family="Liberation Mono" font-size="17.5" fill="#4b5059" textLength="27.90" lengthAdjust="spacing" text-anchor="end" >550</text>
<text x="520.00" y="481.28" font-family="Liberation Mono" font-size="17.5" fill="#cf8e6d" textLength="110.00" lengthAdjust="spacing" >private val</text>
<text x="640.00" y="481.28" font-family="Liberation Mono" font-size="17.5" fill="#c77dbb" textLength="170.00" lengthAdjust="spacing" >ECG_SEGMENT_WIDTH</text>
<path d="M640.0 484.88000000000005 L642.0 483.88000000000005 L644.0 485.68 L646.0 483.88000000000005 L648.0 485.68 L650.0 483.88000000000005 L652.0 485.68 L654.0 483.88000000000005 L656.0 485.68 L658.0 483.88000000000005 L660.0 485.68 L662.0 483.88000000000005 L664.0 485.68 L666.0 483.88000000000005 L668.0 485.68 L670.0 483.88000000000005 L672.0 485.68 L674.0 483.88000000000005 L676.0 485.68 L678.0 483.88000000000005 L680.0 485.68 L682.0 483.88000000000005 L684.0 485.68 L686.0 483.88000000000005 L688.0 485.68 L690.0 483.88000000000005 L692.0 485.68 L694.0 483.88000000000005 L696.0 485.68 L698.0 483.88000000000005 L700.0 485.68 L702.0 483.88000000000005 L704.0 485.68 L706.0 483.88000000000005 L708.0 485.68 L710.0 483.88000000000005 L712.0 485.68 L714.0 483.88000000000005 L716.0 485.68 L718.0 483.88000000000005 L720.0 485.68 L722.0 483.88000000000005 L724.0 485.68 L726.0 483.88000000000005 L728.0 485.68 L730.0 483.88000000000005 L732.0 485.68 L734.0 483.88000000000005 L736.0 485.68 L738.0 483.88000000000005 L740.0 485.68 L742.0 483.88000000000005 L744.0 485.68 L746.0 483.88000000000005 L748.0 485.68 L750.0 483.88000000000005 L752.0 485.68 L754.0 483.88000000000005 L756.0 485.68 L758.0 483.88000000000005 L760.0 485.68 L762.0 483.88000000000005 L764.0 485.68 L766.0 483.88000000000005 L768.0 485.68 L770.0 483.88000000000005 L772.0 485.68 L774.0 483.88000000000005 L776.0 485.68 L778.0 483.88000000000005 L780.0 485.68 L782.0 483.88000000000005 L784.0 485.68 L786.0 483.88000000000005 L788.0 485.68 L790.0 483.88000000000005 L792.0 485.68 L794.0 483.88000000000005 L796.0 485.68 L798.0 483.88000000000005 L800.0 485.68 L802.0 483.88000000000005 L804.0 485.68 L806.0 483.88000000000005 L808.0 485.68 L810.0 483.88000000000005" stroke="#8f7e3e" fill="none" stroke-width="1.0" stroke-linecap="round" stroke-linejoin="round" stroke-linecap="butt"/>
<text x="820.00" y="481.28" font-family="Liberation Mono" font-size="17.5" fill="#bcbec4" textLength="10.00" lengthAdjust="spacing" >=</text>
<text x="840.00" y="481.28" font-family="Liberation Mono" font-size="17.5" fill="#c77dbb" textLength="90.00" lengthAdjust="spacing" >ECG_WIDTH</text>
<text x="940.00" y="481.28" font-family="Liberation Mono" font-size="17.5" fill="#bcbec4" textLength="10.00" lengthAdjust="spacing" >/</text>
<text x="960.00" y="481.28" font-family="Liberation Mono" font-size="17.5" fill="#c77dbb" textLength="90.00" lengthAdjust="spacing" >ECG_COUNT</text>
<text x="423.50" y="508.76" font-family="Liberation Mono" font-size="17.5" fill="#4b5059" textLength="27.90" lengthAdjust="spacing" text-anchor="end" >551</text>
<text x="520.50" y="536.04" font-family="Liberation Sans" font-size="14.5" fill="#868a91" textLength="65.30" lengthAdjust="spacing" >2 Usages</text>
<text x="423.50" y="563.72" font-family="Liberation Mono" font-size="17.5" fill="#4b5059" textLength="27.90" lengthAdjust="spacing" text-anchor="end" >552</text>
<text x="520.00" y="563.72" font-family="Liberation Mono" font-size="17.5" fill="#cf8e6d" textLength="110.00" lengthAdjust="spacing" >private val</text>
<text x="640.00" y="563.72" font-family="Liberation Mono" font-size="17.5" fill="#c77dbb" textLength="170.00" lengthAdjust="spacing" >ecgGradientShader</text>
<text x="820.00" y="563.72" font-family="Liberation Mono" font-size="17.5" fill="#bcbec4" textLength="10.00" lengthAdjust="spacing" >=</text>
<text x="840.00" y="563.72" font-family="Liberation Mono" font-size="17.5" fill="#bcbec4" textLength="150.00" lengthAdjust="spacing" >LinearGradient(</text>
<text x="423.50" y="591.20" font-family="Liberation Mono" font-size="17.5" fill="#4b5059" textLength="27.90" lengthAdjust="spacing" text-anchor="end" >553</text>
<rect x="560.2" y="572.7" width="52" height="24" rx="4.5" fill="#2b2d30"/>
<text x="569.20" y="590.10" font-family="Liberation Sans" font-size="16.5" fill="#8c8f94" textLength="34.30" lengthAdjust="spacing" >x0 =</text>
<text x="613.20" y="591.20" font-family="Liberation Mono" font-size="17.5" fill="#bcbec4" textLength="10.00" lengthAdjust="spacing" >-</text>
<text x="623.20" y="591.20" font-family="Liberation Mono" font-size="17.5" fill="#c77dbb" textLength="150.00" lengthAdjust="spacing" >ECG_TAIL_LENGTH</text>
<text x="773.20" y="591.20" font-family="Liberation Mono" font-size="17.5" fill="#bcbec4" textLength="10.00" lengthAdjust="spacing" >,</text>
<rect x="792.6" y="572.7" width="52" height="24" rx="4.5" fill="#2b2d30"/>
<text x="801.60" y="590.10" font-family="Liberation Sans" font-size="16.5" fill="#8c8f94" textLength="34.50" lengthAdjust="spacing" >y0 =</text>
<text x="845.60" y="591.20" font-family="Liberation Mono" font-size="17.5" fill="#2aacb8" textLength="20.00" lengthAdjust="spacing" >0f</text>
<text x="865.60" y="591.20" font-family="Liberation Mono" font-size="17.5" fill="#bcbec4" textLength="10.00" lengthAdjust="spacing" >,</text>
<rect x="885" y="572.7" width="51" height="24" rx="4.5" fill="#2b2d30"/>
<text x="894.00" y="590.10" font-family="Liberation Sans" font-size="16.5" fill="#8c8f94" textLength="32.50" lengthAdjust="spacing" >x1 =</text>
<text x="937.00" y="591.20" font-family="Liberation Mono" font-size="17.5" fill="#2aacb8" textLength="20.00" lengthAdjust="spacing" >0f</text>
<text x="957.00" y="591.20" font-family="Liberation Mono" font-size="17.5" fill="#bcbec4" textLength="10.00" lengthAdjust="spacing" >,</text>
<rect x="976.4" y="572.7" width="51" height="24" rx="4.5" fill="#2b2d30"/>
<text x="985.40" y="590.10" font-family="Liberation Sans" font-size="16.5" fill="#8c8f94" textLength="33.50" lengthAdjust="spacing" >y1 =</text>
<text x="1028.40" y="591.20" font-family="Liberation Mono" font-size="17.5" fill="#2aacb8" textLength="20.00" lengthAdjust="spacing" >0f</text>
<text x="1048.40" y="591.20" font-family="Liberation Mono" font-size="17.5" fill="#bcbec4" textLength="10.00" lengthAdjust="spacing" >,</text>
<text x="423.50" y="618.68" font-family="Liberation Mono" font-size="17.5" fill="#4b5059" textLength="27.90" lengthAdjust="spacing" text-anchor="end" >554</text>
<rect x="560.2" y="600.1800000000001" width="81" height="24" rx="4.5" fill="#2b2d30"/>
<text x="569.20" y="617.58" font-family="Liberation Sans" font-size="16.5" fill="#8c8f94" textLength="62.50" lengthAdjust="spacing" >colors =</text>
<text x="641.70" y="618.68" font-family="Liberation Mono" font-size="17.5" fill="#bcbec4" textLength="100.00" lengthAdjust="spacing" font-style="italic" >intArrayOf</text>
<text x="741.70" y="618.68" font-family="Liberation Mono" font-size="17.5" fill="#bcbec4" textLength="120.00" lengthAdjust="spacing" >(Color.argb(</text>
<rect x="860.3" y="600.1800000000001" width="75.4" height="24" rx="4.5" fill="#2b2d30"/>
<text x="869.30" y="617.58" font-family="Liberation Sans" font-size="16.5" fill="#8c8f94" textLength="57.20" lengthAdjust="spacing" >alpha =</text>
<text x="936.70" y="618.68" font-family="Liberation Mono" font-size="17.5" fill="#2aacb8" textLength="10.00" lengthAdjust="spacing" >0</text>
<text x="946.70" y="618.68" font-family="Liberation Mono" font-size="17.5" fill="#bcbec4" textLength="10.00" lengthAdjust="spacing" >,</text>
<rect x="966.3" y="600.1800000000001" width="58.5" height="24" rx="4.5" fill="#2b2d30"/>
<text x="975.30" y="617.58" font-family="Liberation Sans" font-size="16.5" fill="#8c8f94" textLength="40.90" lengthAdjust="spacing" >red =</text>
<text x="1025.80" y="618.68" font-family="Liberation Mono" font-size="17.5" fill="#2aacb8" textLength="30.00" lengthAdjust="spacing" >255</text>
<text x="1055.80" y="618.68" font-family="Liberation Mono" font-size="17.5" fill="#bcbec4" textLength="10.00" lengthAdjust="spacing" >,</text>
<rect x="1075.1" y="600.1800000000001" width="59" height="24" rx="4.5" fill="#2b2d30"/>
<text x="1084.10" y="617.58" font-family="Liberation Sans" font-size="16.5" fill="#8c8f94" textLength="44.50" lengthAdjust="spacing" >green</text>
<text x="423.50" y="646.16" font-family="Liberation Mono" font-size="17.5" fill="#4b5059" textLength="27.90" lengthAdjust="spacing" text-anchor="end" >555</text>
<rect x="560.2" y="627.6600000000001" width="105.4" height="24" rx="4.5" fill="#2b2d30"/>
<text x="569.20" y="645.06" font-family="Liberation Sans" font-size="16.5" fill="#8c8f94" textLength="87.50" lengthAdjust="spacing" >positions =</text>
<text x="665.60" y="646.16" font-family="Liberation Mono" font-size="17.5" fill="#bcbec4" textLength="120.00" lengthAdjust="spacing" font-style="italic" >floatArrayOf</text>
<text x="785.60" y="646.16" font-family="Liberation Mono" font-size="17.5" fill="#bcbec4" textLength="10.00" lengthAdjust="spacing" >(</text>
<text x="795.60" y="646.16" font-family="Liberation Mono" font-size="17.5" fill="#2aacb8" textLength="20.00" lengthAdjust="spacing" >0f</text>
<text x="815.60" y="646.16" font-family="Liberation Mono" font-size="17.5" fill="#bcbec4" textLength="10.00" lengthAdjust="spacing" >,</text>
<text x="835.60" y="646.16" font-family="Liberation Mono" font-size="17.5" fill="#2aacb8" textLength="40.00" lengthAdjust="spacing" >0.4f</text>
<text x="875.60" y="646.16" font-family="Liberation Mono" font-size="17.5" fill="#bcbec4" textLength="10.00" lengthAdjust="spacing" >,</text>
<text x="895.60" y="646.16" font-family="Liberation Mono" font-size="17.5" fill="#2aacb8" textLength="40.00" lengthAdjust="spacing" >0.7f</text>
<text x="935.60" y="646.16" font-family="Liberation Mono" font-size="17.5" fill="#bcbec4" textLength="10.00" lengthAdjust="spacing" >,</text>
<text x="955.60" y="646.16" font-family="Liberation Mono" font-size="17.5" fill="#2aacb8" textLength="40.00" lengthAdjust="spacing" >0.9f</text>
<text x="995.60" y="646.16" font-family="Liberation Mono" font-size="17.5" fill="#bcbec4" textLength="10.00" lengthAdjust="spacing" >,</text>
<text x="1015.60" y="646.16" font-family="Liberation Mono" font-size="17.5" fill="#2aacb8" textLength="50.00" lengthAdjust="spacing" >0.98f</text>
<text x="1065.60" y="646.16" font-family="Liberation Mono" font-size="17.5" fill="#bcbec4" textLength="10.00" lengthAdjust="spacing" >,</text>
<text x="1085.60" y="646.16" font-family="Liberation Mono" font-size="17.5" fill="#2aacb8" textLength="20.00" lengthAdjust="spacing" >1f</text>
<text x="1105.60" y="646.16" font-family="Liberation Mono" font-size="17.5" fill="#bcbec4" textLength="20.00" lengthAdjust="spacing" >),</text>
<text x="423.50" y="673.64" font-family="Liberation Mono" font-size="17.5" fill="#4b5059" textLength="27.90" lengthAdjust="spacing" text-anchor="end" >556</text>
<rect x="560.2" y="655.14" width="55.8" height="24" rx="4.5" fill="#2b2d30"/>
<text x="569.20" y="672.54" font-family="Liberation Sans" font-size="16.5" fill="#8c8f94" textLength="37.50" lengthAdjust="spacing" >tile =</text>
<text x="616.50" y="673.64" font-family="Liberation Mono" font-size="17.5" fill="#bcbec4" textLength="160.00" lengthAdjust="spacing" >Shader.TileMode.</text>
<text x="776.50" y="673.64" font-family="Liberation Mono" font-size="17.5" fill="#c77dbb" textLength="50.00" lengthAdjust="spacing" font-style="italic" >CLAMP</text>
<text x="423.50" y="701.12" font-family="Liberation Mono" font-size="17.5" fill="#4b5059" textLength="27.90" lengthAdjust="spacing" text-anchor="end" >557</text>
<text x="520.00" y="701.12" font-family="Liberation Mono" font-size="17.5" fill="#bcbec4" textLength="10.00" lengthAdjust="spacing" >)</text>
<text x="520.50" y="728.40" font-family="Liberation Sans" font-size="14.5" fill="#868a91" textLength="65.30" lengthAdjust="spacing" >2 Usages</text>
<text x="423.50" y="756.08" font-family="Liberation Mono" font-size="17.5" fill="#4b5059" textLength="27.90" lengthAdjust="spacing" text-anchor="end" >558</text>
<text x="520.00" y="756.08" font-family="Liberation Mono" font-size="17.5" fill="#cf8e6d" textLength="110.00" lengthAdjust="spacing" >private val</text>
<text x="640.00" y="756.08" font-family="Liberation Mono" font-size="17.5" fill="#c77dbb" textLength="120.00" lengthAdjust="spacing" >shaderMatrix</text>
<text x="770.00" y="756.08" font-family="Liberation Mono" font-size="17.5" fill="#bcbec4" textLength="10.00" lengthAdjust="spacing" >=</text>
<text x="790.00" y="756.08" font-family="Liberation Mono" font-size="17.5" fill="#bcbec4" textLength="80.00" lengthAdjust="spacing" >Matrix()</text>
<text x="520.50" y="783.36" font-family="Liberation Sans" font-size="14.5" fill="#868a91" textLength="72.50" lengthAdjust="spacing" >15 Usages</text>
<text x="423.50" y="811.04" font-family="Liberation Mono" font-size="17.5" fill="#4b5059" textLength="27.90" lengthAdjust="spacing" text-anchor="end" >559</text>
<text x="520.00" y="811.04" font-family="Liberation Mono" font-size="17.5" fill="#cf8e6d" textLength="110.00" lengthAdjust="spacing" >private val</text>
<text x="640.00" y="811.04" font-family="Liberation Mono" font-size="17.5" fill="#c77dbb" textLength="110.00" lengthAdjust="spacing" >fullEcgPath</text>
<text x="760.00" y="811.04" font-family="Liberation Mono" font-size="17.5" fill="#bcbec4" textLength="10.00" lengthAdjust="spacing" >=</text>
<text x="780.00" y="811.04" font-family="Liberation Mono" font-size="17.5" fill="#bcbec4" textLength="60.00" lengthAdjust="spacing" >Path()</text>
<text x="520.50" y="838.32" font-family="Liberation Sans" font-size="14.5" fill="#868a91" textLength="65.30" lengthAdjust="spacing" >6 Usages</text>
<text x="423.50" y="866.00" font-family="Liberation Mono" font-size="17.5" fill="#4b5059" textLength="27.90" lengthAdjust="spacing" text-anchor="end" >560</text>
<text x="520.00" y="866.00" font-family="Liberation Mono" font-size="17.5" fill="#cf8e6d" textLength="110.00" lengthAdjust="spacing" >private var</text>
<text x="640.00" y="866.00" font-family="Liberation Mono" font-size="17.5" fill="#c77dbb" textLength="70.00" lengthAdjust="spacing" >scanPos</text>
<rect x="640.0" y="868.3" width="70.0" height="1.1" fill="#a9abb0" />
<text x="720.00" y="866.00" font-family="Liberation Mono" font-size="17.5" fill="#bcbec4" textLength="10.00" lengthAdjust="spacing" >=</text>
<text x="740.00" y="866.00" font-family="Liberation Mono" font-size="17.5" fill="#2aacb8" textLength="20.00" lengthAdjust="spacing" >0f</text>
<text x="520.50" y="893.28" font-family="Liberation Sans" font-size="14.5" fill="#868a91" textLength="65.30" lengthAdjust="spacing" >2 Usages</text>
<text x="423.50" y="920.96" font-family="Liberation Mono" font-size="17.5" fill="#4b5059" textLength="27.90" lengthAdjust="spacing" text-anchor="end" >561</text>
<text x="520.00" y="920.96" font-family="Liberation Mono" font-size="17.5" fill="#cf8e6d" textLength="110.00" lengthAdjust="spacing" >private var</text>
<text x="640.00" y="920.96" font-family="Liberation Mono" font-size="17.5" fill="#c77dbb" textLength="140.00" lengthAdjust="spacing" >lastRenderTime</text>
<rect x="640.0" y="923.26" width="140.0" height="1.1" fill="#a9abb0" />
<text x="790.00" y="920.96" font-family="Liberation Mono" font-size="17.5" fill="#bcbec4" textLength="10.00" lengthAdjust="spacing" >=</text>
<text x="810.00" y="920.96" font-family="Liberation Mono" font-size="17.5" fill="#bcbec4" textLength="260.00" lengthAdjust="spacing" >System.currentTimeMillis()</text>
<text x="423.50" y="948.44" font-family="Liberation Mono" font-size="17.5" fill="#4b5059" textLength="27.90" lengthAdjust="spacing" text-anchor="end" >562</text>
<text x="520.50" y="975.72" font-family="Liberation Sans" font-size="14.5" fill="#868a91" textLength="55.40" lengthAdjust="spacing" >1 Usage</text>
</g>
<rect x="1121.5" y="778.4" width="10.8" height="41.8" fill="#4a4c50" rx="2" />
<rect x="1116" y="166" width="17" height="3" fill="#c9a64e" />
<rect x="1116" y="172" width="17" height="3" fill="#c9a64e" />
<rect x="1116" y="235.6" width="17" height="4" fill="#c9a64e" />
<rect x="1116" y="242" width="17" height="3" fill="#c9a64e" />
<rect x="1116" y="248.4" width="17" height="5" fill="#c9a64e" />
<rect x="1116" y="264.3" width="17" height="6" fill="#c9a64e" />
<rect x="1116" y="274.7" width="17" height="13.7" fill="#c9a64e" />
<rect x="1116" y="299.2" width="17" height="7" fill="#c9a64e" />
<rect x="1116" y="315.5" width="17" height="8" fill="#c9a64e" />
<rect x="1116" y="361.5" width="17" height="5.6" fill="#c9a64e" />
<rect x="1116" y="376.7" width="17" height="3.3" fill="#c9a64e" />
<rect x="1116" y="389" width="17" height="3.2" fill="#c9a64e" />
<rect x="1116" y="520.5" width="17" height="2.2" fill="#c9a64e" />
<rect x="1116" y="647" width="17" height="2.5" fill="#c9a64e" />
<rect x="1116" y="650.5" width="17" height="2.5" fill="#c9a64e" />
<rect x="1116" y="654" width="17" height="2.5" fill="#c9a64e" />
<rect x="1116" y="670.5" width="17" height="2.5" fill="#c9a64e" />
<rect x="1116" y="674.5" width="17" height="2.5" fill="#c9a64e" />
<rect x="1116" y="784.5" width="17" height="2.2" fill="#c9a64e" />
<rect x="1116" y="922" width="17" height="2.2" fill="#c9a64e" />
<g transform="translate(1160 66.8) scale(1.0)"><circle cx="0" cy="0" r="5.5" fill="none" stroke="#ced0d6" stroke-width="1.4"/><path d="M-3 -5 L-2.5 -8.5 L2.5 -8.5 L3 -5 M-3 5 L-2.5 8.5 L2.5 8.5 L3 5" fill="none" stroke="#ced0d6" stroke-width="1.4" stroke-linejoin="round"/><circle cx="0" cy="0" r="1" fill="#ced0d6"/></g>
<circle cx="1165.8" cy="73.3" r="2.6" fill="#2b2d30"/><circle cx="1165.8" cy="73.3" r="1.9" fill="#2fd13a"/>
<path d="M1406.3 64.7 L1415.3 73.7 M1415.3 64.7 L1406.3 73.7" stroke="#8c8f94" fill="none" stroke-width="1.3" stroke-linecap="round" stroke-linejoin="round" />
<path d="M1437.2 66.7 L1453.2 66.7 M1445.2 58.7 L1445.2 74.7" stroke="#ced0d6" fill="none" stroke-width="1.5" stroke-linecap="round" stroke-linejoin="round" />
<path d="M1777 60 L1771 60 Q1770 60 1770 61 L1770 73.5 Q1770 74.5 1771 74.5 L1784.5 74.5 Q1785.5 74.5 1785.5 73.5 L1785.5 67.5 M1777.5 67 L1786 58.5 M1780 58.5 L1786 58.5 L1786 64.5" stroke="#ced0d6" fill="none" stroke-width="1.4" stroke-linecap="round" stroke-linejoin="round" />
<circle cx="1809.7" cy="60.7" r="1.6" fill="#ced0d6"/>
<circle cx="1809.7" cy="67" r="1.6" fill="#ced0d6"/>
<circle cx="1809.7" cy="73.3" r="1.6" fill="#ced0d6"/>
<rect x="1834.8" y="66.3" width="16.2" height="1.5" fill="#ced0d6" />
<circle cx="1160.1" cy="115.2" r="8.5" fill="none" stroke="#ced0d6" stroke-width="1.3"/>
<path d="M1168.3 113.0 L1170.1 115.2 L1168.3 117.4" stroke="#ced0d6" fill="#ced0d6" stroke-width="1.1" stroke-linecap="round" stroke-linejoin="round" />
<path d="M1165.8999999999999 106.5 L1168.3999999999999 109.0" stroke="#ced0d6" fill="none" stroke-width="1.2" stroke-linecap="round" stroke-linejoin="round" />
<path d="M1157.6999999999998 111.8 L1160.5 109.9 L1160.5 120.5" stroke="#ced0d6" fill="none" stroke-width="1.5" stroke-linecap="round" stroke-linejoin="round" />
<circle cx="1193.2" cy="115.2" r="8.5" fill="none" stroke="#ced0d6" stroke-width="1.3"/>
<path d="M1201.4 113.0 L1203.2 115.2 L1201.4 117.4" stroke="#ced0d6" fill="#ced0d6" stroke-width="1.1" stroke-linecap="round" stroke-linejoin="round" />
<path d="M1199.0 106.5 L1201.5 109.0" stroke="#ced0d6" fill="none" stroke-width="1.2" stroke-linecap="round" stroke-linejoin="round" />
<path d="M1189.9 112.60000000000001 Q1190.4 109.8 1193.2 109.8 Q1196.4 109.8 1196.4 112.7 Q1196.4 114.60000000000001 1194.4 116.4 L1189.9 120.5 L1196.8 120.5" stroke="#ced0d6" fill="none" stroke-width="1.5" stroke-linecap="round" stroke-linejoin="round" stroke-linejoin="miter"/>
<rect x="1213.3" y="103.5" width="1" height="23" fill="#43454a" />
<rect x="1286.3" y="103.5" width="1" height="23" fill="#43454a" />
<rect x="1360.3" y="103.5" width="1" height="23" fill="#43454a" />
<path d="M1229 123.5 Q1225.5 120.5 1225.5 115.5 A9 9 0 0 1 1240.5 108.5 M1232 125 L1229 119 Q1228 117 1230 117 L1232 119 L1232 110 Q1232 108.5 1233.5 108.5 Q1235 108.5 1235 110 L1235 116 L1235 108 Q1235 106.5 1236.5 106.5 Q1238 106.5 1238 108 L1238 116 L1238 109 Q1238 107.5 1239.5 107.5 Q1241 107.5 1241 109 L1241 116 L1241 111 Q1241 109.5 1242.5 109.5 Q1244 109.5 1244 111 L1244 121 Q1244 126 1239 126 L1234 126" stroke="#ced0d6" fill="none" stroke-width="1.2" stroke-linecap="round" stroke-linejoin="round" />
<path d="M1271.2 109.6 L1271.2 120.4 L1261.4 115 Z" stroke="#ced0d6" fill="none" stroke-width="1.4" stroke-linecap="round" stroke-linejoin="round" />
<path d="M1308 122.3 L1304.6 122.3 Q1303.3 122.3 1303.3 121 L1303.3 108.9 Q1303.3 107.6 1304.6 107.6 L1311.6 107.6 Q1312.9 107.6 1312.9 108.9 L1312.9 113.5" stroke="#ced0d6" fill="none" stroke-width="1.3" stroke-linecap="round" stroke-linejoin="round" />
<rect x="1306.8" y="110.3" width="2.2" height="1.2" fill="#ced0d6" />
<path d="M1317.60 120.10 L1317.59 120.40 L1317.56 120.70 L1317.30 120.96 L1316.91 121.15 L1316.52 121.29 L1316.23 121.44 L1316.14 121.65 L1316.03 121.85 L1315.91 122.04 L1315.78 122.23 L1315.79 122.55 L1315.86 122.96 L1315.89 123.40 L1315.80 123.75 L1315.56 123.92 L1315.30 124.08 L1315.03 124.23 L1314.76 124.35 L1314.41 124.25 L1314.05 124.01 L1313.72 123.74 L1313.46 123.57 L1313.23 123.59 L1313.00 123.60 L1312.77 123.59 L1312.54 123.57 L1312.28 123.74 L1311.95 124.01 L1311.59 124.25 L1311.24 124.35 L1310.97 124.23 L1310.70 124.08 L1310.44 123.92 L1310.20 123.75 L1310.11 123.40 L1310.14 122.96 L1310.21 122.55 L1310.22 122.23 L1310.09 122.04 L1309.97 121.85 L1309.86 121.65 L1309.77 121.44 L1309.48 121.29 L1309.09 121.15 L1308.70 120.96 L1308.44 120.70 L1308.41 120.40 L1308.40 120.10 L1308.41 119.80 L1308.44 119.50 L1308.70 119.24 L1309.09 119.05 L1309.48 118.91 L1309.77 118.76 L1309.86 118.55 L1309.97 118.35 L1310.09 118.16 L1310.22 117.97 L1310.21 117.65 L1310.14 117.24 L1310.11 116.80 L1310.20 116.45 L1310.44 116.28 L1310.70 116.12 L1310.97 115.97 L1311.24 115.85 L1311.59 115.95 L1311.95 116.19 L1312.28 116.46 L1312.54 116.63 L1312.77 116.61 L1313.00 116.60 L1313.23 116.61 L1313.46 116.63 L1313.72 116.46 L1314.05 116.19 L1314.41 115.95 L1314.76 115.85 L1315.03 115.97 L1315.30 116.12 L1315.56 116.28 L1315.80 116.45 L1315.89 116.80 L1315.86 117.24 L1315.79 117.65 L1315.78 117.97 L1315.91 118.16 L1316.03 118.35 L1316.14 118.55 L1316.23 118.76 L1316.52 118.91 L1316.91 119.05 L1317.30 119.24 L1317.56 119.50 L1317.59 119.80 Z" fill="#2b2d30" stroke="#ced0d6" stroke-width="1.2" stroke-linejoin="round"/>
<circle cx="1313" cy="120.1" r="1.1" fill="#ced0d6"/>
<path d="M1341 118.7 L1333 118.7 Q1331.5 118.7 1331.5 117.2 L1331.5 109 Q1331.5 107.5 1333 107.5 L1346.3 107.5 Q1347.8 107.5 1347.8 109 L1347.8 114.5" stroke="#ced0d6" fill="none" stroke-width="1.3" stroke-linecap="round" stroke-linejoin="round" />
<rect x="1334.8" y="110" width="1.5" height="1.2" fill="#ced0d6" />
<rect x="1337.3999999999999" y="110" width="1.5" height="1.2" fill="#ced0d6" />
<rect x="1340.0" y="110" width="1.5" height="1.2" fill="#ced0d6" />
<rect x="1335.3" y="112.5" width="1.5" height="1.2" fill="#ced0d6" />
<rect x="1337.8999999999999" y="112.5" width="1.5" height="1.2" fill="#ced0d6" />
<rect x="1340.5" y="112.5" width="1.5" height="1.2" fill="#ced0d6" />
<rect x="1336.5" y="115" width="5.3" height="1.2" fill="#ced0d6" />
<rect x="1342.7" y="115.8" width="5.8" height="7.8" rx="2.9" fill="#2b2d30" stroke="#ced0d6" stroke-width="1.3"/>
<rect x="1345.2" y="117.5" width="1" height="2.5" fill="#ced0d6" />
<path d="M1374 110.8 L1376.8 110.8 L1378.2 107.8 L1384.4 107.8 L1385.8 110.8 L1388.3 110.8 Q1389.6 110.8 1389.6 112.1 L1389.6 121 Q1389.6 122.3 1388.3 122.3 L1374 122.3 Q1372.7 122.3 1372.7 121 L1372.7 112.1 Q1372.7 110.8 1374 110.8 Z" stroke="#ced0d6" fill="none" stroke-width="1.3" stroke-linecap="round" stroke-linejoin="round" />
<circle cx="1380.9" cy="115.9" r="3.1" fill="none" stroke="#ced0d6" stroke-width="1.3"/>
<circle cx="1386.6" cy="113.2" r="0.6" fill="#ced0d6"/>
<path d="M1407 110.6 L1415.8 110.6 Q1417 110.6 1417 111.8 L1417 119.8 Q1417 121 1415.8 121 L1407 121 Q1405.8 121 1405.8 119.8 L1405.8 111.8 Q1405.8 110.6 1407 110.6 Z M1417 114 L1422.4 110.6 L1422.4 121 L1417 117.6" stroke="#ced0d6" fill="none" stroke-width="1.3" stroke-linecap="round" stroke-linejoin="round" />
<path d="M1837 110 L1837 108 L1852 108 L1852 112 M1835 111 L1848 111 M1835 111 L1835 123 L1840 123" stroke="#ced0d6" fill="none" stroke-width="1.3" stroke-linecap="round" stroke-linejoin="round" />
<circle cx="1846" cy="119" r="3.5" fill="none" stroke="#ced0d6" stroke-width="1.3"/>
<path d="M1848.5 121.5 L1852 125" stroke="#ced0d6" fill="none" stroke-width="1.3" stroke-linecap="round" stroke-linejoin="round" />
<rect x="1815.5" y="815.5" width="34" height="134" rx="6" fill="none" stroke="#393b40" stroke-width="1"/>
<path d="M1824.1 833.2 L1840.5 833.2 M1832.3 825.0 L1832.3 841.4000000000001" stroke="#ced0d6" fill="none" stroke-width="1.3" stroke-linecap="round" stroke-linejoin="round" />
<rect x="1824" y="864.7" width="16.5" height="1.3" fill="#6f737a" />
<path d="M1825 896.6 L1829.1 893.7 L1829.1 904.2 M1835.3 896.6 L1839.4 893.7 L1839.4 904.2" stroke="#6f737a" fill="none" stroke-width="1.7" stroke-linecap="round" stroke-linejoin="round" stroke-linecap="butt"/>
<circle cx="1832.6" cy="896.5" r="1.05" fill="#6f737a"/><circle cx="1832.6" cy="903.1" r="1.05" fill="#6f737a"/>
<rect x="1824.5" y="923.5" width="17" height="14.5" rx="2.5" fill="none" stroke="#ced0d6" stroke-width="1.3"/>
<path d="M1828.5 931 L1828.5 927.5 L1832 927.5 M1837.5 930 L1837.5 933.8 L1834 933.8" stroke="#ced0d6" fill="none" stroke-width="1.3" stroke-linecap="round" stroke-linejoin="round" />
<text x="1175.50" y="74.30" font-family="Liberation Sans" font-size="17" fill="#dfe1e5" textLength="214.80" lengthAdjust="spacing" >Samsung SM-R920 API 36.0</text>
<rect x="1135" y="90" width="295" height="3" fill="#3574f0" />
<rect x="1135" y="92.5" width="734" height="1" fill="#1e1f22" />
<rect x="1135" y="136" width="734" height="1" fill="#1e1f22" />
<defs><radialGradient id="domeg" cx="1502" cy="470" r="175" gradientUnits="userSpaceOnUse"><stop offset="0" stop-color="#50546b"/><stop offset="0.6" stop-color="#4a4e66"/><stop offset="0.86" stop-color="#41455c"/><stop offset="1" stop-color="#35384c"/></radialGradient><clipPath id="domeclip"><path d="M1350 553 A152 152 0 0 1 1654 553 Z"/></clipPath><filter id="blur4" x="-50%" y="-50%" width="200%" height="200%"><feGaussianBlur stdDeviation="5"/></filter><filter id="blur2" x="-50%" y="-50%" width="200%" height="200%"><feGaussianBlur stdDeviation="2.5"/></filter><filter id="blur1"><feGaussianBlur stdDeviation="0.5"/></filter><linearGradient id="ecgg" x1="1379" y1="0" x2="1626" y2="0" gradientUnits="userSpaceOnUse"><stop offset="0" stop-color="#940000"/><stop offset="0.3" stop-color="#cc0000"/><stop offset="0.4" stop-color="#ff1010"/><stop offset="0.41" stop-color="#ff1a1a"/><stop offset="0.418" stop-color="#2a0000"/><stop offset="0.7" stop-color="#440000"/><stop offset="1" stop-color="#660000"/></linearGradient></defs>
<circle cx="1502.2" cy="555.3" r="225" fill="#030303"/>
<path d="M1502.20 357.60L1502.20 345.00M1522.92 358.69L1524.23 346.15M1543.41 361.93L1546.03 349.61M1563.45 367.30L1567.34 355.32M1582.82 374.74L1587.94 363.22M1601.30 384.15L1607.60 373.24M1618.70 395.45L1626.11 385.26M1634.82 408.51L1643.25 399.15M1649.49 423.18L1658.85 414.75M1662.55 439.30L1672.74 431.89M1673.85 456.70L1684.76 450.40M1683.26 475.18L1694.78 470.06M1690.70 494.55L1702.68 490.66M1696.07 514.59L1708.39 511.97M1699.31 535.08L1711.85 533.77M1700.40 555.80L1713.00 555.80M1699.31 576.52L1711.85 577.83M1696.07 597.01L1708.39 599.63M1690.70 617.05L1702.68 620.94M1683.26 636.42L1694.78 641.54M1673.85 654.90L1684.76 661.20M1662.55 672.30L1672.74 679.71M1649.49 688.42L1658.85 696.85M1634.82 703.09L1643.25 712.45M1618.70 716.15L1626.11 726.34M1601.30 727.45L1607.60 738.36M1582.82 736.86L1587.94 748.38M1563.45 744.30L1567.34 756.28M1543.41 749.67L1546.03 761.99M1522.92 752.91L1524.23 765.45M1502.20 754.00L1502.20 766.60M1481.48 752.91L1480.17 765.45M1460.99 749.67L1458.37 761.99M1440.95 744.30L1437.06 756.28M1421.58 736.86L1416.46 748.38M1403.10 727.45L1396.80 738.36M1385.70 716.15L1378.29 726.34M1369.58 703.09L1361.15 712.45M1354.91 688.42L1345.55 696.85M1341.85 672.30L1331.66 679.71M1330.55 654.90L1319.64 661.20M1321.14 636.42L1309.62 641.54M1313.70 617.05L1301.72 620.94M1308.33 597.01L1296.01 599.63M1305.09 576.52L1292.55 577.83M1304.00 555.80L1291.40 555.80M1305.09 535.08L1292.55 533.77M1308.33 514.59L1296.01 511.97M1313.70 494.55L1301.72 490.66M1321.14 475.18L1309.62 470.06M1330.55 456.70L1319.64 450.40M1341.85 439.30L1331.66 431.89M1354.91 423.18L1345.55 414.75M1369.58 408.51L1361.15 399.15M1385.70 395.45L1378.29 385.26M1403.10 384.15L1396.80 373.24M1421.58 374.74L1416.46 363.22M1440.95 367.30L1437.06 355.32M1460.99 361.93L1458.37 349.61M1481.48 358.69L1480.17 346.15" stroke="#bdbdbd" stroke-width="1.9" fill="none"/>
<path d="M1506.36 357.14L1506.52 349.65M1510.52 357.27L1510.83 349.78M1514.68 357.49L1515.15 350.01M1518.83 357.80L1519.45 350.32M1527.10 358.67L1528.04 351.23M1531.23 359.23L1532.32 351.81M1535.34 359.88L1536.59 352.49M1539.43 360.62L1540.84 353.25M1547.57 362.35L1549.29 355.05M1551.61 363.34L1553.48 356.08M1555.63 364.42L1557.65 357.20M1559.63 365.58L1561.80 358.40M1567.55 368.15L1570.01 361.07M1571.46 369.56L1574.08 362.53M1575.35 371.05L1578.11 364.08M1579.20 372.63L1582.11 365.71M1586.80 376.01L1590.00 369.22M1590.55 377.82L1593.88 371.10M1594.26 379.71L1597.73 373.06M1597.92 381.68L1601.54 375.11M1605.13 385.84L1609.02 379.42M1608.67 388.03L1612.69 381.70M1612.16 390.30L1616.31 384.05M1615.60 392.64L1619.88 386.48M1622.33 397.53L1626.87 391.56M1625.62 400.08L1630.28 394.20M1628.86 402.70L1633.64 396.92M1632.03 405.39L1636.94 399.71M1638.22 410.95L1643.35 405.49M1641.22 413.83L1646.47 408.48M1644.17 416.78L1649.52 411.53M1647.05 419.78L1652.51 414.65M1652.61 425.97L1658.29 421.06M1655.30 429.14L1661.08 424.36M1657.92 432.38L1663.80 427.72M1660.47 435.67L1666.44 431.13M1665.36 442.40L1671.52 438.12M1667.70 445.84L1673.95 441.69M1669.97 449.33L1676.30 445.31M1672.16 452.87L1678.58 448.98M1676.32 460.08L1682.89 456.46M1678.29 463.74L1684.94 460.27M1680.18 467.45L1686.90 464.12M1681.99 471.20L1688.78 468.00M1685.37 478.80L1692.29 475.89M1686.95 482.65L1693.92 479.89M1688.44 486.54L1695.47 483.92M1689.85 490.45L1696.93 487.99M1692.42 498.37L1699.60 496.20M1693.58 502.37L1700.80 500.35M1694.66 506.39L1701.92 504.52M1695.65 510.43L1702.95 508.71M1697.38 518.57L1704.75 517.16M1698.12 522.66L1705.51 521.41M1698.77 526.77L1706.19 525.68M1699.33 530.90L1706.77 529.96M1700.20 539.17L1707.68 538.55M1700.51 543.32L1707.99 542.85M1700.73 547.48L1708.22 547.17M1700.86 551.64L1708.35 551.48M1700.86 559.96L1708.35 560.12M1700.73 564.12L1708.22 564.43M1700.51 568.28L1707.99 568.75M1700.20 572.43L1707.68 573.05M1699.33 580.70L1706.77 581.64M1698.77 584.83L1706.19 585.92M1698.12 588.94L1705.51 590.19M1697.38 593.03L1704.75 594.44M1695.65 601.17L1702.95 602.89M1694.66 605.21L1701.92 607.08M1693.58 609.23L1700.80 611.25M1692.42 613.23L1699.60 615.40M1689.85 621.15L1696.93 623.61M1688.44 625.06L1695.47 627.68M1686.95 628.95L1693.92 631.71M1685.37 632.80L1692.29 635.71M1681.99 640.40L1688.78 643.60M1680.18 644.15L1686.90 647.48M1678.29 647.86L1684.94 651.33M1676.32 651.52L1682.89 655.14M1672.16 658.73L1678.58 662.62M1669.97 662.27L1676.30 666.29M1667.70 665.76L1673.95 669.91M1665.36 669.20L1671.52 673.48M1660.47 675.93L1666.44 680.47M1657.92 679.22L1663.80 683.88M1655.30 682.46L1661.08 687.24M1652.61 685.63L1658.29 690.54M1647.05 691.82L1652.51 696.95M1644.17 694.82L1649.52 700.07M1641.22 697.77L1646.47 703.12M1638.22 700.65L1643.35 706.11M1632.03 706.21L1636.94 711.89M1628.86 708.90L1633.64 714.68M1625.62 711.52L1630.28 717.40M1622.33 714.07L1626.87 720.04M1615.60 718.96L1619.88 725.12M1612.16 721.30L1616.31 727.55M1608.67 723.57L1612.69 729.90M1605.13 725.76L1609.02 732.18M1597.92 729.92L1601.54 736.49M1594.26 731.89L1597.73 738.54M1590.55 733.78L1593.88 740.50M1586.80 735.59L1590.00 742.38M1579.20 738.97L1582.11 745.89M1575.35 740.55L1578.11 747.52M1571.46 742.04L1574.08 749.07M1567.55 743.45L1570.01 750.53M1559.63 746.02L1561.80 753.20M1555.63 747.18L1557.65 754.40M1551.61 748.26L1553.48 755.52M1547.57 749.25L1549.29 756.55M1539.43 750.98L1540.84 758.35M1535.34 751.72L1536.59 759.11M1531.23 752.37L1532.32 759.79M1527.10 752.93L1528.04 760.37M1518.83 753.80L1519.45 761.28M1514.68 754.11L1515.15 761.59M1510.52 754.33L1510.83 761.82M1506.36 754.46L1506.52 761.95M1498.04 754.46L1497.88 761.95M1493.88 754.33L1493.57 761.82M1489.72 754.11L1489.25 761.59M1485.57 753.80L1484.95 761.28M1477.30 752.93L1476.36 760.37M1473.17 752.37L1472.08 759.79M1469.06 751.72L1467.81 759.11M1464.97 750.98L1463.56 758.35M1456.83 749.25L1455.11 756.55M1452.79 748.26L1450.92 755.52M1448.77 747.18L1446.75 754.40M1444.77 746.02L1442.60 753.20M1436.85 743.45L1434.39 750.53M1432.94 742.04L1430.32 749.07M1429.05 740.55L1426.29 747.52M1425.20 738.97L1422.29 745.89M1417.60 735.59L1414.40 742.38M1413.85 733.78L1410.52 740.50M1410.14 731.89L1406.67 738.54M1406.48 729.92L1402.86 736.49M1399.27 725.76L1395.38 732.18M1395.73 723.57L1391.71 729.90M1392.24 721.30L1388.09 727.55M1388.80 718.96L1384.52 725.12M1382.07 714.07L1377.53 720.04M1378.78 711.52L1374.12 717.40M1375.54 708.90L1370.76 714.68M1372.37 706.21L1367.46 711.89M1366.18 700.65L1361.05 706.11M1363.18 697.77L1357.93 703.12M1360.23 694.82L1354.88 700.07M1357.35 691.82L1351.89 696.95M1351.79 685.63L1346.11 690.54M1349.10 682.46L1343.32 687.24M1346.48 679.22L1340.60 683.88M1343.93 675.93L1337.96 680.47M1339.04 669.20L1332.88 673.48M1336.70 665.76L1330.45 669.91M1334.43 662.27L1328.10 666.29M1332.24 658.73L1325.82 662.62M1328.08 651.52L1321.51 655.14M1326.11 647.86L1319.46 651.33M1324.22 644.15L1317.50 647.48M1322.41 640.40L1315.62 643.60M1319.03 632.80L1312.11 635.71M1317.45 628.95L1310.48 631.71M1315.96 625.06L1308.93 627.68M1314.55 621.15L1307.47 623.61M1311.98 613.23L1304.80 615.40M1310.82 609.23L1303.60 611.25M1309.74 605.21L1302.48 607.08M1308.75 601.17L1301.45 602.89M1307.02 593.03L1299.65 594.44M1306.28 588.94L1298.89 590.19M1305.63 584.83L1298.21 585.92M1305.07 580.70L1297.63 581.64M1304.20 572.43L1296.72 573.05M1303.89 568.28L1296.41 568.75M1303.67 564.12L1296.18 564.43M1303.54 559.96L1296.05 560.12M1303.54 551.64L1296.05 551.48M1303.67 547.48L1296.18 547.17M1303.89 543.32L1296.41 542.85M1304.20 539.17L1296.72 538.55M1305.07 530.90L1297.63 529.96M1305.63 526.77L1298.21 525.68M1306.28 522.66L1298.89 521.41M1307.02 518.57L1299.65 517.16M1308.75 510.43L1301.45 508.71M1309.74 506.39L1302.48 504.52M1310.82 502.37L1303.60 500.35M1311.98 498.37L1304.80 496.20M1314.55 490.45L1307.47 487.99M1315.96 486.54L1308.93 483.92M1317.45 482.65L1310.48 479.89M1319.03 478.80L1312.11 475.89M1322.41 471.20L1315.62 468.00M1324.22 467.45L1317.50 464.12M1326.11 463.74L1319.46 460.27M1328.08 460.08L1321.51 456.46M1332.24 452.87L1325.82 448.98M1334.43 449.33L1328.10 445.31M1336.70 445.84L1330.45 441.69M1339.04 442.40L1332.88 438.12M1343.93 435.67L1337.96 431.13M1346.48 432.38L1340.60 427.72M1349.10 429.14L1343.32 424.36M1351.79 425.97L1346.11 421.06M1357.35 419.78L1351.89 414.65M1360.23 416.78L1354.88 411.53M1363.18 413.83L1357.93 408.48M1366.18 410.95L1361.05 405.49M1372.37 405.39L1367.46 399.71M1375.54 402.70L1370.76 396.92M1378.78 400.08L1374.12 394.20M1382.07 397.53L1377.53 391.56M1388.80 392.64L1384.52 386.48M1392.24 390.30L1388.09 384.05M1395.73 388.03L1391.71 381.70M1399.27 385.84L1395.38 379.42M1406.48 381.68L1402.86 375.11M1410.14 379.71L1406.67 373.06M1413.85 377.82L1410.52 371.10M1417.60 376.01L1414.40 369.22M1425.20 372.63L1422.29 365.71M1429.05 371.05L1426.29 364.08M1432.94 369.56L1430.32 362.53M1436.85 368.15L1434.39 361.07M1444.77 365.58L1442.60 358.40M1448.77 364.42L1446.75 357.20M1452.79 363.34L1450.92 356.08M1456.83 362.35L1455.11 355.05M1464.97 360.62L1463.56 353.25M1469.06 359.88L1467.81 352.49M1473.17 359.23L1472.08 351.81M1477.30 358.67L1476.36 351.23M1485.57 357.80L1484.95 350.32M1489.72 357.49L1489.25 350.01M1493.88 357.27L1493.57 349.78M1498.04 357.14L1497.88 349.65" stroke="#a2a2a2" stroke-width="1.6" fill="none"/>
<path d="M1505.97 375.34L1506.10 369.14" stroke="#2c2c2e" stroke-width="1.4"/>
<path d="M1509.74 375.46L1510.00 369.26" stroke="#2c2c2e" stroke-width="1.4"/>
<path d="M1513.50 375.66L1513.89 369.47" stroke="#2c2c2e" stroke-width="1.4"/>
<path d="M1517.26 375.93L1517.78 369.75" stroke="#2c2c2e" stroke-width="1.4"/>
<path d="M1520.54 380.76L1521.66 370.12" stroke="#2c2c2e" stroke-width="1.6"/>
<path d="M1524.76 376.72L1525.54 370.57" stroke="#2c2c2e" stroke-width="1.4"/>
<path d="M1528.49 377.23L1529.40 371.10" stroke="#2c2c2e" stroke-width="1.4"/>
<path d="M1532.22 377.82L1533.25 371.71" stroke="#2c2c2e" stroke-width="1.4"/>
<path d="M1535.93 378.49L1537.09 372.40" stroke="#2c2c2e" stroke-width="1.4"/>
<path d="M1538.69 383.64L1540.91 373.17" stroke="#2c2c2e" stroke-width="1.6"/>
<path d="M1543.30 380.06L1544.72 374.02" stroke="#2c2c2e" stroke-width="1.4"/>
<path d="M1546.96 380.96L1548.51 374.95" stroke="#2c2c2e" stroke-width="1.4"/>
<path d="M1550.61 381.93L1552.27 375.96" stroke="#2c2c2e" stroke-width="1.4"/>
<path d="M1554.23 382.98L1556.02 377.05" stroke="#2c2c2e" stroke-width="1.4"/>
<path d="M1556.43 388.39L1559.74 378.21" stroke="#2c2c2e" stroke-width="1.6"/>
<path d="M1561.40 385.31L1563.43 379.46" stroke="#2c2c2e" stroke-width="1.4"/>
<path d="M1564.94 386.59L1567.10 380.78" stroke="#2c2c2e" stroke-width="1.4"/>
<path d="M1568.46 387.94L1570.74 382.18" stroke="#2c2c2e" stroke-width="1.4"/>
<path d="M1571.95 389.36L1574.36 383.65" stroke="#2c2c2e" stroke-width="1.4"/>
<path d="M1573.58 394.97L1577.93 385.20" stroke="#2c2c2e" stroke-width="1.6"/>
<path d="M1578.84 392.43L1581.48 386.82" stroke="#2c2c2e" stroke-width="1.4"/>
<path d="M1582.23 394.07L1584.99 388.52" stroke="#2c2c2e" stroke-width="1.4"/>
<path d="M1585.59 395.78L1588.47 390.29" stroke="#2c2c2e" stroke-width="1.4"/>
<path d="M1588.92 397.56L1591.90 392.13" stroke="#2c2c2e" stroke-width="1.4"/>
<path d="M1595.44 401.33L1598.66 396.03" stroke="#2c2c2e" stroke-width="1.4"/>
<path d="M1598.65 403.32L1601.97 398.09" stroke="#2c2c2e" stroke-width="1.4"/>
<path d="M1601.81 405.37L1605.24 400.21" stroke="#4a58a6" stroke-width="1.4"/>
<path d="M1604.93 407.49L1608.47 402.40" stroke="#4a58a6" stroke-width="1.4"/>
<path d="M1605.36 413.32L1611.65 404.66" stroke="#4a58a6" stroke-width="1.6"/>
<path d="M1611.03 411.92L1614.78 406.99" stroke="#4a58a6" stroke-width="1.4"/>
<path d="M1614.01 414.24L1617.86 409.38" stroke="#4a58a6" stroke-width="1.4"/>
<path d="M1616.94 416.61L1620.89 411.83" stroke="#4a58a6" stroke-width="1.4"/>
<path d="M1619.82 419.04L1623.87 414.35" stroke="#4a58a6" stroke-width="1.4"/>
<path d="M1619.63 424.88L1626.79 416.93" stroke="#4a58a6" stroke-width="1.6"/>
<path d="M1625.42 424.09L1629.66 419.57" stroke="#4a58a6" stroke-width="1.4"/>
<path d="M1628.14 426.69L1632.48 422.27" stroke="#4a58a6" stroke-width="1.4"/>
<path d="M1630.81 429.36L1635.23 425.02" stroke="#4a58a6" stroke-width="1.4"/>
<path d="M1633.41 432.08L1637.93 427.84" stroke="#4a58a6" stroke-width="1.4"/>
<path d="M1632.62 437.87L1640.57 430.71" stroke="#4a58a6" stroke-width="1.6"/>
<path d="M1638.46 437.68L1643.15 433.63" stroke="#4a58a6" stroke-width="1.4"/>
<path d="M1640.89 440.56L1645.67 436.61" stroke="#4a58a6" stroke-width="1.4"/>
<path d="M1643.26 443.49L1648.12 439.64" stroke="#4a58a6" stroke-width="1.4"/>
<path d="M1645.58 446.47L1650.51 442.72" stroke="#4a58a6" stroke-width="1.4"/>
<path d="M1644.18 452.14L1652.84 445.85" stroke="#4a58a6" stroke-width="1.6"/>
<path d="M1650.01 452.57L1655.10 449.03" stroke="#4a58a6" stroke-width="1.4"/>
<path d="M1652.13 455.69L1657.29 452.26" stroke="#4a58a6" stroke-width="1.4"/>
<path d="M1654.18 458.85L1659.41 455.53" stroke="#4a58a6" stroke-width="1.4"/>
<path d="M1656.17 462.06L1661.47 458.84" stroke="#4a58a6" stroke-width="1.4"/>
<path d="M1659.94 468.58L1665.37 465.60" stroke="#4a58a6" stroke-width="1.4"/>
<path d="M1661.72 471.91L1667.21 469.03" stroke="#4a58a6" stroke-width="1.4"/>
<path d="M1663.43 475.27L1668.98 472.51" stroke="#4a58a6" stroke-width="1.4"/>
<path d="M1665.07 478.66L1670.68 476.02" stroke="#4a58a6" stroke-width="1.4"/>
<path d="M1662.53 483.92L1672.30 479.57" stroke="#4a58a6" stroke-width="1.6"/>
<path d="M1668.14 485.55L1673.85 483.14" stroke="#4a58a6" stroke-width="1.4"/>
<path d="M1669.56 489.04L1675.32 486.76" stroke="#4a58a6" stroke-width="1.4"/>
<path d="M1670.91 492.56L1676.72 490.40" stroke="#4a58a6" stroke-width="1.4"/>
<path d="M1672.19 496.10L1678.04 494.07" stroke="#4a58a6" stroke-width="1.4"/>
<path d="M1669.11 501.07L1679.29 497.76" stroke="#4a58a6" stroke-width="1.6"/>
<path d="M1674.52 503.27L1680.45 501.48" stroke="#4a58a6" stroke-width="1.4"/>
<path d="M1675.57 506.89L1681.54 505.23" stroke="#4a58a6" stroke-width="1.4"/>
<path d="M1676.54 510.54L1682.55 508.99" stroke="#4a58a6" stroke-width="1.4"/>
<path d="M1677.44 514.20L1683.48 512.78" stroke="#4a58a6" stroke-width="1.4"/>
<path d="M1673.86 518.81L1684.33 516.59" stroke="#4a58a6" stroke-width="1.6"/>
<path d="M1679.01 521.57L1685.10 520.41" stroke="#4a58a6" stroke-width="1.4"/>
<path d="M1679.68 525.28L1685.79 524.25" stroke="#4a58a6" stroke-width="1.4"/>
<path d="M1680.27 529.01L1686.40 528.10" stroke="#4a58a6" stroke-width="1.4"/>
<path d="M1680.78 532.74L1686.93 531.96" stroke="#4a58a6" stroke-width="1.4"/>
<path d="M1676.74 536.96L1687.38 535.84" stroke="#4a58a6" stroke-width="1.6"/>
<path d="M1681.57 540.24L1687.75 539.72" stroke="#4a58a6" stroke-width="1.4"/>
<path d="M1681.84 544.00L1688.03 543.61" stroke="#4a58a6" stroke-width="1.4"/>
<path d="M1682.04 547.76L1688.24 547.50" stroke="#4a58a6" stroke-width="1.4"/>
<path d="M1682.16 551.53L1688.36 551.40" stroke="#4a58a6" stroke-width="1.4"/>
<path d="M1682.16 559.07L1688.36 559.20" stroke="#4a58a6" stroke-width="1.4"/>
<path d="M1682.04 562.84L1688.24 563.10" stroke="#4a58a6" stroke-width="1.4"/>
<path d="M1681.84 566.60L1688.03 566.99" stroke="#4a58a6" stroke-width="1.4"/>
<path d="M1681.57 570.36L1687.75 570.88" stroke="#4a58a6" stroke-width="1.4"/>
<path d="M1676.74 573.64L1687.38 574.76" stroke="#4a58a6" stroke-width="1.6"/>
<path d="M1680.78 577.86L1686.93 578.64" stroke="#4a58a6" stroke-width="1.4"/>
<path d="M1680.27 581.59L1686.40 582.50" stroke="#4a58a6" stroke-width="1.4"/>
<path d="M1679.68 585.32L1685.79 586.35" stroke="#4a58a6" stroke-width="1.4"/>
<path d="M1679.01 589.03L1685.10 590.19" stroke="#4a58a6" stroke-width="1.4"/>
<path d="M1673.86 591.79L1684.33 594.01" stroke="#4a58a6" stroke-width="1.6"/>
<path d="M1677.44 596.40L1683.48 597.82" stroke="#4a58a6" stroke-width="1.4"/>
<path d="M1676.54 600.06L1682.55 601.61" stroke="#4a58a6" stroke-width="1.4"/>
<path d="M1675.57 603.71L1681.54 605.37" stroke="#4a58a6" stroke-width="1.4"/>
<path d="M1674.52 607.33L1680.45 609.12" stroke="#4a58a6" stroke-width="1.4"/>
<path d="M1669.11 609.53L1679.29 612.84" stroke="#4a58a6" stroke-width="1.6"/>
<path d="M1672.19 614.50L1678.04 616.53" stroke="#4a58a6" stroke-width="1.4"/>
<path d="M1670.91 618.04L1676.72 620.20" stroke="#4a58a6" stroke-width="1.4"/>
<path d="M1669.56 621.56L1675.32 623.84" stroke="#4a58a6" stroke-width="1.4"/>
<path d="M1668.14 625.05L1673.85 627.46" stroke="#4a58a6" stroke-width="1.4"/>
<path d="M1662.53 626.68L1672.30 631.03" stroke="#4a58a6" stroke-width="1.6"/>
<path d="M1665.07 631.94L1670.68 634.58" stroke="#4a58a6" stroke-width="1.4"/>
<path d="M1663.43 635.33L1668.98 638.09" stroke="#4a58a6" stroke-width="1.4"/>
<path d="M1661.72 638.69L1667.21 641.57" stroke="#4a58a6" stroke-width="1.4"/>
<path d="M1659.94 642.02L1665.37 645.00" stroke="#4a58a6" stroke-width="1.4"/>
<path d="M1656.17 648.54L1661.47 651.76" stroke="#4a58a6" stroke-width="1.4"/>
<path d="M1654.18 651.75L1659.41 655.07" stroke="#4a58a6" stroke-width="1.4"/>
<path d="M1652.13 654.91L1657.29 658.34" stroke="#4a58a6" stroke-width="1.4"/>
<path d="M1650.01 658.03L1655.10 661.57" stroke="#4a58a6" stroke-width="1.4"/>
<path d="M1644.18 658.46L1652.84 664.75" stroke="#4a58a6" stroke-width="1.6"/>
<path d="M1645.58 664.13L1650.51 667.88" stroke="#4a58a6" stroke-width="1.4"/>
<path d="M1643.26 667.11L1648.12 670.96" stroke="#4a58a6" stroke-width="1.4"/>
<path d="M1640.89 670.04L1645.67 673.99" stroke="#4a58a6" stroke-width="1.4"/>
<path d="M1638.46 672.92L1643.15 676.97" stroke="#4a58a6" stroke-width="1.4"/>
<path d="M1632.62 672.73L1640.57 679.89" stroke="#4a58a6" stroke-width="1.6"/>
<path d="M1633.41 678.52L1637.93 682.76" stroke="#4a58a6" stroke-width="1.4"/>
<path d="M1630.81 681.24L1635.23 685.58" stroke="#4a58a6" stroke-width="1.4"/>
<path d="M1628.14 683.91L1632.48 688.33" stroke="#4a58a6" stroke-width="1.4"/>
<path d="M1625.42 686.51L1629.66 691.03" stroke="#4a58a6" stroke-width="1.4"/>
<path d="M1619.63 685.72L1626.79 693.67" stroke="#4a58a6" stroke-width="1.6"/>
<path d="M1619.82 691.56L1623.87 696.25" stroke="#4a58a6" stroke-width="1.4"/>
<path d="M1616.94 693.99L1620.89 698.77" stroke="#4a58a6" stroke-width="1.4"/>
<path d="M1614.01 696.36L1617.86 701.22" stroke="#4a58a6" stroke-width="1.4"/>
<path d="M1611.03 698.68L1614.78 703.61" stroke="#4a58a6" stroke-width="1.4"/>
<path d="M1605.36 697.28L1611.65 705.94" stroke="#4a58a6" stroke-width="1.6"/>
<path d="M1604.93 703.11L1608.47 708.20" stroke="#4a58a6" stroke-width="1.4"/>
<path d="M1601.81 705.23L1605.24 710.39" stroke="#4a58a6" stroke-width="1.4"/>
<path d="M1598.65 707.28L1601.97 712.51" stroke="#4a58a6" stroke-width="1.4"/>
<path d="M1595.44 709.27L1598.66 714.57" stroke="#4a58a6" stroke-width="1.4"/>
<path d="M1588.92 713.04L1591.90 718.47" stroke="#4a58a6" stroke-width="1.4"/>
<path d="M1585.59 714.82L1588.47 720.31" stroke="#4a58a6" stroke-width="1.4"/>
<path d="M1582.23 716.53L1584.99 722.08" stroke="#4a58a6" stroke-width="1.4"/>
<path d="M1578.84 718.17L1581.48 723.78" stroke="#4a58a6" stroke-width="1.4"/>
<path d="M1573.58 715.63L1577.93 725.40" stroke="#4a58a6" stroke-width="1.6"/>
<path d="M1571.95 721.24L1574.36 726.95" stroke="#4a58a6" stroke-width="1.4"/>
<path d="M1568.46 722.66L1570.74 728.42" stroke="#4a58a6" stroke-width="1.4"/>
<path d="M1564.94 724.01L1567.10 729.82" stroke="#4a58a6" stroke-width="1.4"/>
<path d="M1561.40 725.29L1563.43 731.14" stroke="#4a58a6" stroke-width="1.4"/>
<path d="M1556.43 722.21L1559.74 732.39" stroke="#4a58a6" stroke-width="1.6"/>
<path d="M1554.23 727.62L1556.02 733.55" stroke="#4a58a6" stroke-width="1.4"/>
<path d="M1550.61 728.67L1552.27 734.64" stroke="#4a58a6" stroke-width="1.4"/>
<path d="M1546.96 729.64L1548.51 735.65" stroke="#4a58a6" stroke-width="1.4"/>
<path d="M1543.30 730.54L1544.72 736.58" stroke="#4a58a6" stroke-width="1.4"/>
<path d="M1538.69 726.96L1540.91 737.43" stroke="#4a58a6" stroke-width="1.6"/>
<path d="M1535.93 732.11L1537.09 738.20" stroke="#4a58a6" stroke-width="1.4"/>
<path d="M1532.22 732.78L1533.25 738.89" stroke="#4a58a6" stroke-width="1.4"/>
<path d="M1528.49 733.37L1529.40 739.50" stroke="#4a58a6" stroke-width="1.4"/>
<path d="M1524.76 733.88L1525.54 740.03" stroke="#4a58a6" stroke-width="1.4"/>
<path d="M1520.54 729.84L1521.66 740.48" stroke="#4a58a6" stroke-width="1.6"/>
<path d="M1517.26 734.67L1517.78 740.85" stroke="#4a58a6" stroke-width="1.4"/>
<path d="M1513.50 734.94L1513.89 741.13" stroke="#4a58a6" stroke-width="1.4"/>
<path d="M1509.74 735.14L1510.00 741.34" stroke="#4a58a6" stroke-width="1.4"/>
<path d="M1505.97 735.26L1506.10 741.46" stroke="#4a58a6" stroke-width="1.4"/>
<path d="M1498.43 735.26L1498.30 741.46" stroke="#4a58a6" stroke-width="1.4"/>
<path d="M1494.66 735.14L1494.40 741.34" stroke="#4a58a6" stroke-width="1.4"/>
<path d="M1490.90 734.94L1490.51 741.13" stroke="#4a58a6" stroke-width="1.4"/>
<path d="M1487.14 734.67L1486.62 740.85" stroke="#4a58a6" stroke-width="1.4"/>
<path d="M1483.86 729.84L1482.74 740.48" stroke="#4a58a6" stroke-width="1.6"/>
<path d="M1479.64 733.88L1478.86 740.03" stroke="#4a58a6" stroke-width="1.4"/>
<path d="M1475.91 733.37L1475.00 739.50" stroke="#4a58a6" stroke-width="1.4"/>
<path d="M1472.18 732.78L1471.15 738.89" stroke="#4a58a6" stroke-width="1.4"/>
<path d="M1468.47 732.11L1467.31 738.20" stroke="#4a58a6" stroke-width="1.4"/>
<path d="M1465.71 726.96L1463.49 737.43" stroke="#4a58a6" stroke-width="1.6"/>
<path d="M1461.10 730.54L1459.68 736.58" stroke="#4a58a6" stroke-width="1.4"/>
<path d="M1457.44 729.64L1455.89 735.65" stroke="#4a58a6" stroke-width="1.4"/>
<path d="M1453.79 728.67L1452.13 734.64" stroke="#4a58a6" stroke-width="1.4"/>
<path d="M1450.17 727.62L1448.38 733.55" stroke="#4a58a6" stroke-width="1.4"/>
<path d="M1447.97 722.21L1444.66 732.39" stroke="#4a58a6" stroke-width="1.6"/>
<path d="M1443.00 725.29L1440.97 731.14" stroke="#4a58a6" stroke-width="1.4"/>
<path d="M1439.46 724.01L1437.30 729.82" stroke="#4a58a6" stroke-width="1.4"/>
<path d="M1435.94 722.66L1433.66 728.42" stroke="#4a58a6" stroke-width="1.4"/>
<path d="M1432.45 721.24L1430.04 726.95" stroke="#4a58a6" stroke-width="1.4"/>
<path d="M1430.82 715.63L1426.47 725.40" stroke="#4a58a6" stroke-width="1.6"/>
<path d="M1425.56 718.17L1422.92 723.78" stroke="#4a58a6" stroke-width="1.4"/>
<path d="M1422.17 716.53L1419.41 722.08" stroke="#4a58a6" stroke-width="1.4"/>
<path d="M1418.81 714.82L1415.93 720.31" stroke="#4a58a6" stroke-width="1.4"/>
<path d="M1415.48 713.04L1412.50 718.47" stroke="#4a58a6" stroke-width="1.4"/>
<path d="M1408.96 709.27L1405.74 714.57" stroke="#4a58a6" stroke-width="1.4"/>
<path d="M1405.75 707.28L1402.43 712.51" stroke="#4a58a6" stroke-width="1.4"/>
<path d="M1402.59 705.23L1399.16 710.39" stroke="#4a58a6" stroke-width="1.4"/>
<path d="M1399.47 703.11L1395.93 708.20" stroke="#4a58a6" stroke-width="1.4"/>
<path d="M1399.04 697.28L1392.75 705.94" stroke="#4a58a6" stroke-width="1.6"/>
<path d="M1393.37 698.68L1389.62 703.61" stroke="#4a58a6" stroke-width="1.4"/>
<path d="M1390.39 696.36L1386.54 701.22" stroke="#4a58a6" stroke-width="1.4"/>
<path d="M1387.46 693.99L1383.51 698.77" stroke="#4a58a6" stroke-width="1.4"/>
<path d="M1384.58 691.56L1380.53 696.25" stroke="#4a58a6" stroke-width="1.4"/>
<path d="M1384.77 685.72L1377.61 693.67" stroke="#4a58a6" stroke-width="1.6"/>
<path d="M1378.98 686.51L1374.74 691.03" stroke="#4a58a6" stroke-width="1.4"/>
<path d="M1376.26 683.91L1371.92 688.33" stroke="#4a58a6" stroke-width="1.4"/>
<path d="M1373.59 681.24L1369.17 685.58" stroke="#4a58a6" stroke-width="1.4"/>
<path d="M1370.99 678.52L1366.47 682.76" stroke="#4a58a6" stroke-width="1.4"/>
<path d="M1371.78 672.73L1363.83 679.89" stroke="#4a58a6" stroke-width="1.6"/>
<path d="M1365.94 672.92L1361.25 676.97" stroke="#4a58a6" stroke-width="1.4"/>
<path d="M1363.51 670.04L1358.73 673.99" stroke="#4a58a6" stroke-width="1.4"/>
<path d="M1361.14 667.11L1356.28 670.96" stroke="#4a58a6" stroke-width="1.4"/>
<path d="M1358.82 664.13L1353.89 667.88" stroke="#4a58a6" stroke-width="1.4"/>
<path d="M1360.22 658.46L1351.56 664.75" stroke="#4a58a6" stroke-width="1.6"/>
<path d="M1354.39 658.03L1349.30 661.57" stroke="#4a58a6" stroke-width="1.4"/>
<path d="M1352.27 654.91L1347.11 658.34" stroke="#4a58a6" stroke-width="1.4"/>
<path d="M1350.22 651.75L1344.99 655.07" stroke="#4a58a6" stroke-width="1.4"/>
<path d="M1348.23 648.54L1342.93 651.76" stroke="#4a58a6" stroke-width="1.4"/>
<path d="M1344.46 642.02L1339.03 645.00" stroke="#4a58a6" stroke-width="1.4"/>
<path d="M1342.68 638.69L1337.19 641.57" stroke="#4a58a6" stroke-width="1.4"/>
<path d="M1340.97 635.33L1335.42 638.09" stroke="#4a58a6" stroke-width="1.4"/>
<path d="M1339.33 631.94L1333.72 634.58" stroke="#4a58a6" stroke-width="1.4"/>
<path d="M1341.87 626.68L1332.10 631.03" stroke="#4a58a6" stroke-width="1.6"/>
<path d="M1336.26 625.05L1330.55 627.46" stroke="#4a58a6" stroke-width="1.4"/>
<path d="M1334.84 621.56L1329.08 623.84" stroke="#4a58a6" stroke-width="1.4"/>
<path d="M1333.49 618.04L1327.68 620.20" stroke="#4a58a6" stroke-width="1.4"/>
<path d="M1332.21 614.50L1326.36 616.53" stroke="#4a58a6" stroke-width="1.4"/>
<path d="M1335.29 609.53L1325.11 612.84" stroke="#4a58a6" stroke-width="1.6"/>
<path d="M1329.88 607.33L1323.95 609.12" stroke="#4a58a6" stroke-width="1.4"/>
<path d="M1328.83 603.71L1322.86 605.37" stroke="#4a58a6" stroke-width="1.4"/>
<path d="M1327.86 600.06L1321.85 601.61" stroke="#4a58a6" stroke-width="1.4"/>
<path d="M1326.96 596.40L1320.92 597.82" stroke="#4a58a6" stroke-width="1.4"/>
<path d="M1330.54 591.79L1320.07 594.01" stroke="#4a58a6" stroke-width="1.6"/>
<path d="M1325.39 589.03L1319.30 590.19" stroke="#4a58a6" stroke-width="1.4"/>
<path d="M1324.72 585.32L1318.61 586.35" stroke="#4a58a6" stroke-width="1.4"/>
<path d="M1324.13 581.59L1318.00 582.50" stroke="#4a58a6" stroke-width="1.4"/>
<path d="M1323.62 577.86L1317.47 578.64" stroke="#4a58a6" stroke-width="1.4"/>
<path d="M1327.66 573.64L1317.02 574.76" stroke="#4a58a6" stroke-width="1.6"/>
<path d="M1322.83 570.36L1316.65 570.88" stroke="#4a58a6" stroke-width="1.4"/>
<path d="M1322.56 566.60L1316.37 566.99" stroke="#4a58a6" stroke-width="1.4"/>
<path d="M1322.36 562.84L1316.16 563.10" stroke="#4a58a6" stroke-width="1.4"/>
<path d="M1322.24 559.07L1316.04 559.20" stroke="#4a58a6" stroke-width="1.4"/>
<path d="M1322.24 551.53L1316.04 551.40" stroke="#4a58a6" stroke-width="1.4"/>
<path d="M1322.36 547.76L1316.16 547.50" stroke="#4a58a6" stroke-width="1.4"/>
<path d="M1322.56 544.00L1316.37 543.61" stroke="#4a58a6" stroke-width="1.4"/>
<path d="M1322.83 540.24L1316.65 539.72" stroke="#4a58a6" stroke-width="1.4"/>
<path d="M1327.66 536.96L1317.02 535.84" stroke="#4a58a6" stroke-width="1.6"/>
<path d="M1323.62 532.74L1317.47 531.96" stroke="#4a58a6" stroke-width="1.4"/>
<path d="M1324.13 529.01L1318.00 528.10" stroke="#4a58a6" stroke-width="1.4"/>
<path d="M1324.72 525.28L1318.61 524.25" stroke="#4a58a6" stroke-width="1.4"/>
<path d="M1325.39 521.57L1319.30 520.41" stroke="#4a58a6" stroke-width="1.4"/>
<path d="M1330.54 518.81L1320.07 516.59" stroke="#4a58a6" stroke-width="1.6"/>
<path d="M1326.96 514.20L1320.92 512.78" stroke="#4a58a6" stroke-width="1.4"/>
<path d="M1327.86 510.54L1321.85 508.99" stroke="#4a58a6" stroke-width="1.4"/>
<path d="M1328.83 506.89L1322.86 505.23" stroke="#4a58a6" stroke-width="1.4"/>
<path d="M1329.88 503.27L1323.95 501.48" stroke="#4a58a6" stroke-width="1.4"/>
<path d="M1335.29 501.07L1325.11 497.76" stroke="#4a58a6" stroke-width="1.6"/>
<path d="M1332.21 496.10L1326.36 494.07" stroke="#4a58a6" stroke-width="1.4"/>
<path d="M1333.49 492.56L1327.68 490.40" stroke="#4a58a6" stroke-width="1.4"/>
<path d="M1334.84 489.04L1329.08 486.76" stroke="#4a58a6" stroke-width="1.4"/>
<path d="M1336.26 485.55L1330.55 483.14" stroke="#4a58a6" stroke-width="1.4"/>
<path d="M1341.87 483.92L1332.10 479.57" stroke="#4a58a6" stroke-width="1.6"/>
<path d="M1339.33 478.66L1333.72 476.02" stroke="#4a58a6" stroke-width="1.4"/>
<path d="M1340.97 475.27L1335.42 472.51" stroke="#4a58a6" stroke-width="1.4"/>
<path d="M1342.68 471.91L1337.19 469.03" stroke="#4a58a6" stroke-width="1.4"/>
<path d="M1344.46 468.58L1339.03 465.60" stroke="#4a58a6" stroke-width="1.4"/>
<path d="M1348.23 462.06L1342.93 458.84" stroke="#4a58a6" stroke-width="1.4"/>
<path d="M1350.22 458.85L1344.99 455.53" stroke="#4a58a6" stroke-width="1.4"/>
<path d="M1352.27 455.69L1347.11 452.26" stroke="#4a58a6" stroke-width="1.4"/>
<path d="M1354.39 452.57L1349.30 449.03" stroke="#4a58a6" stroke-width="1.4"/>
<path d="M1360.22 452.14L1351.56 445.85" stroke="#4a58a6" stroke-width="1.6"/>
<path d="M1358.82 446.47L1353.89 442.72" stroke="#4a58a6" stroke-width="1.4"/>
<path d="M1361.14 443.49L1356.28 439.64" stroke="#4a58a6" stroke-width="1.4"/>
<path d="M1363.51 440.56L1358.73 436.61" stroke="#4a58a6" stroke-width="1.4"/>
<path d="M1365.94 437.68L1361.25 433.63" stroke="#4a58a6" stroke-width="1.4"/>
<path d="M1371.78 437.87L1363.83 430.71" stroke="#4a58a6" stroke-width="1.6"/>
<path d="M1370.99 432.08L1366.47 427.84" stroke="#4a58a6" stroke-width="1.4"/>
<path d="M1373.59 429.36L1369.17 425.02" stroke="#4a58a6" stroke-width="1.4"/>
<path d="M1376.26 426.69L1371.92 422.27" stroke="#4a58a6" stroke-width="1.4"/>
<path d="M1378.98 424.09L1374.74 419.57" stroke="#4a58a6" stroke-width="1.4"/>
<path d="M1384.77 424.88L1377.61 416.93" stroke="#4a58a6" stroke-width="1.6"/>
<path d="M1384.58 419.04L1380.53 414.35" stroke="#4a58a6" stroke-width="1.4"/>
<path d="M1387.46 416.61L1383.51 411.83" stroke="#4a58a6" stroke-width="1.4"/>
<path d="M1390.39 414.24L1386.54 409.38" stroke="#4a58a6" stroke-width="1.4"/>
<path d="M1393.37 411.92L1389.62 406.99" stroke="#4a58a6" stroke-width="1.4"/>
<path d="M1399.04 413.32L1392.75 404.66" stroke="#4a58a6" stroke-width="1.6"/>
<path d="M1399.47 407.49L1395.93 402.40" stroke="#4a58a6" stroke-width="1.4"/>
<path d="M1402.59 405.37L1399.16 400.21" stroke="#4a58a6" stroke-width="1.4"/>
<path d="M1405.75 403.32L1402.43 398.09" stroke="#5360b1" stroke-width="1.4"/>
<path d="M1408.96 401.33L1405.74 396.03" stroke="#4f5ba4" stroke-width="1.4"/>
<path d="M1415.48 397.56L1412.50 392.13" stroke="#485189" stroke-width="1.4"/>
<path d="M1418.81 395.78L1415.93 390.29" stroke="#454c7c" stroke-width="1.4"/>
<path d="M1422.17 394.07L1419.41 388.52" stroke="#41486f" stroke-width="1.4"/>
<path d="M1425.56 392.43L1422.92 386.82" stroke="#3e4362" stroke-width="1.4"/>
<path d="M1430.82 394.97L1426.47 385.20" stroke="#3a3e55" stroke-width="1.6"/>
<path d="M1432.45 389.36L1430.04 383.65" stroke="#373947" stroke-width="1.4"/>
<path d="M1435.94 387.94L1433.66 382.18" stroke="#33343a" stroke-width="1.4"/>
<path d="M1439.46 386.59L1437.30 380.78" stroke="#2c2c2e" stroke-width="1.4"/>
<path d="M1443.00 385.31L1440.97 379.46" stroke="#2c2c2e" stroke-width="1.4"/>
<path d="M1447.97 388.39L1444.66 378.21" stroke="#2c2c2e" stroke-width="1.6"/>
<path d="M1450.17 382.98L1448.38 377.05" stroke="#2c2c2e" stroke-width="1.4"/>
<path d="M1453.79 381.93L1452.13 375.96" stroke="#2c2c2e" stroke-width="1.4"/>
<path d="M1457.44 380.96L1455.89 374.95" stroke="#2c2c2e" stroke-width="1.4"/>
<path d="M1461.10 380.06L1459.68 374.02" stroke="#2c2c2e" stroke-width="1.4"/>
<path d="M1465.71 383.64L1463.49 373.17" stroke="#2c2c2e" stroke-width="1.6"/>
<path d="M1468.47 378.49L1467.31 372.40" stroke="#2c2c2e" stroke-width="1.4"/>
<path d="M1472.18 377.82L1471.15 371.71" stroke="#2c2c2e" stroke-width="1.4"/>
<path d="M1475.91 377.23L1475.00 371.10" stroke="#2c2c2e" stroke-width="1.4"/>
<path d="M1479.64 376.72L1478.86 370.57" stroke="#2c2c2e" stroke-width="1.4"/>
<path d="M1483.86 380.76L1482.74 370.12" stroke="#2c2c2e" stroke-width="1.6"/>
<path d="M1487.14 375.93L1486.62 369.75" stroke="#2c2c2e" stroke-width="1.4"/>
<path d="M1490.90 375.66L1490.51 369.47" stroke="#2c2c2e" stroke-width="1.4"/>
<path d="M1494.66 375.46L1494.40 369.26" stroke="#2c2c2e" stroke-width="1.4"/>
<path d="M1498.43 375.34L1498.30 369.14" stroke="#2c2c2e" stroke-width="1.4"/>
<path d="M1498.41 384.34L1498.04 367.85" stroke="#3c3c3e" stroke-width="4.3"/>
<path d="M1505.99 384.34L1506.36 367.85" stroke="#3c3c3e" stroke-width="4.3"/>
<path d="M1584.40 405.35L1592.33 390.88" stroke="#3c3c3e" stroke-width="4.3"/>
<path d="M1590.96 409.14L1599.53 395.04" stroke="#3c3c3e" stroke-width="4.3"/>
<path d="M1648.36 466.54L1662.46 457.97" stroke="#5866ba" stroke-width="4.3"/>
<path d="M1652.15 473.10L1666.62 465.17" stroke="#5866ba" stroke-width="4.3"/>
<path d="M1673.16 551.51L1689.65 551.14" stroke="#5866ba" stroke-width="4.3"/>
<path d="M1673.16 559.09L1689.65 559.46" stroke="#5866ba" stroke-width="4.3"/>
<path d="M1652.15 637.50L1666.62 645.43" stroke="#5866ba" stroke-width="4.3"/>
<path d="M1648.36 644.06L1662.46 652.63" stroke="#5866ba" stroke-width="4.3"/>
<path d="M1590.96 701.46L1599.53 715.56" stroke="#5866ba" stroke-width="4.3"/>
<path d="M1584.40 705.25L1592.33 719.72" stroke="#5866ba" stroke-width="4.3"/>
<path d="M1505.99 726.26L1506.36 742.75" stroke="#5866ba" stroke-width="4.3"/>
<path d="M1498.41 726.26L1498.04 742.75" stroke="#5866ba" stroke-width="4.3"/>
<path d="M1420.00 705.25L1412.07 719.72" stroke="#5866ba" stroke-width="4.3"/>
<path d="M1413.44 701.46L1404.87 715.56" stroke="#5866ba" stroke-width="4.3"/>
<path d="M1356.04 644.06L1341.94 652.63" stroke="#5866ba" stroke-width="4.3"/>
<path d="M1352.25 637.50L1337.78 645.43" stroke="#5866ba" stroke-width="4.3"/>
<path d="M1331.24 559.09L1314.75 559.46" stroke="#5866ba" stroke-width="4.3"/>
<path d="M1331.24 551.51L1314.75 551.14" stroke="#5866ba" stroke-width="4.3"/>
<path d="M1352.25 473.10L1337.78 465.17" stroke="#5866ba" stroke-width="4.3"/>
<path d="M1356.04 466.54L1341.94 457.97" stroke="#5866ba" stroke-width="4.3"/>
<path d="M1413.44 409.14L1404.87 395.04" stroke="#5863a6" stroke-width="4.3"/>
<path d="M1420.00 405.35L1412.07 390.88" stroke="#5863a6" stroke-width="4.3"/>
<path d="M1676.92 650.56L1693.60 659.65" stroke="#ff2020" stroke-width="2.2"/>
<g clip-path="url(#domeclip)">
<circle cx="1502" cy="554.5" r="153" fill="url(#domeg)"/>
<ellipse cx="1420" cy="450" rx="40" ry="25" fill="#5a5e75" filter="url(#blur4)"/>
<ellipse cx="1550" cy="440" rx="60" ry="30" fill="#585c73" filter="url(#blur4)"/>
<ellipse cx="1500" cy="418" rx="60" ry="16" fill="#5b5f76" filter="url(#blur4)"/>
<ellipse cx="1415" cy="520" rx="45" ry="22" fill="#53576e" filter="url(#blur4)"/>
<ellipse cx="1580" cy="515" rx="40" ry="22" fill="#53576e" filter="url(#blur4)"/>
<ellipse cx="1480" cy="505" rx="35" ry="18" fill="#43475e" filter="url(#blur4)"/>
<ellipse cx="1620" cy="485" rx="20" ry="25" fill="#42466a" filter="url(#blur4)"/>
<ellipse cx="1390" cy="462" rx="12" ry="8" fill="#3e4a8c" filter="url(#blur4)"/>
<ellipse cx="1400" cy="551" rx="40" ry="5" fill="#44519a" fill-opacity="0.8" filter="url(#blur2)"/>
<ellipse cx="1510" cy="551" rx="45" ry="5" fill="#44519a" fill-opacity="0.8" filter="url(#blur2)"/>
<ellipse cx="1600" cy="549" rx="40" ry="7" fill="#44519a" fill-opacity="0.8" filter="url(#blur2)"/>
<ellipse cx="1644" cy="520" rx="8" ry="22" fill="#44519a" fill-opacity="0.8" filter="url(#blur2)"/>
<ellipse cx="1362" cy="520" rx="8" ry="18" fill="#44519a" fill-opacity="0.8" filter="url(#blur2)"/>
<circle cx="1502" cy="554.5" r="153" fill="none" stroke="#0c0d12" stroke-width="8" filter="url(#blur2)"/>
</g>
<rect x="1345" y="553" width="314.2" height="3" fill="#5161b2" />
<text x="1459.40" y="440.00" font-family="Liberation Sans" font-size="23.5" fill="#b9b9bb" textLength="28.00" lengthAdjust="spacing" >86</text>
<text x="1517.00" y="440.00" font-family="Liberation Sans" font-size="23.5" fill="#b9b9bb" textLength="24.50" lengthAdjust="spacing" >81</text>
<text x="1423.00" y="479.80" font-family="Liberation Sans" font-size="26" fill="#b7b7b9" textLength="158.30" lengthAdjust="spacing" >31.  SOBOTA</text>
<defs><mask id="moonm"><rect x="1350" y="460" width="40" height="40" fill="#fff"/><circle cx="1371.8" cy="474.8" r="6.6" fill="#000"/></mask></defs>
<circle cx="1366.8" cy="480" r="7.2" fill="#f2f2f2" mask="url(#moonm)"/>
<path d="M1390.2 495.2 L1401.3 512.8 L1379.1 512.8 Z" fill="none" stroke="#ff1010" stroke-width="2.3"/>
<path d="M1594.3 493.4 L1616.6 493.4 L1605.7 511.5 Z" fill="none" stroke="#22a6e8" stroke-width="2.3"/>
<path d="M1386 526.9 L1389.6 526.9 L1389.6 544 L1386 544 L1386 529.5 L1381.2 532.8 L1381.2 530.4 Z" fill="#d5dae0"/>
<circle cx="1394.3" cy="530.5" r="2.8" fill="none" stroke="#d5dae0" stroke-width="1.6"/>
<rect x="1589.1" y="536.3" width="8.7" height="1.9" fill="#d5dae0" />
<path d="M1601.6 531.2 C1601.6 528.2 1604 527.5 1606.8 527.5 C1609.8 527.5 1611.8 529.2 1611.8 531.5 C1611.8 533.8 1610.5 535.2 1608.5 537 L1602.2 542.7 L1613.3 542.7" fill="none" stroke="#d5dae0" stroke-width="2.5" stroke-linejoin="miter"/>
<circle cx="1617.5" cy="530.5" r="2.7" fill="none" stroke="#d5dae0" stroke-width="1.6"/>
<rect x="1478.9" y="520.9" width="13.7" height="4.1" fill="#bdbdc1" />
<path d="M1503.9 505 L1508.2 505 L1508.2 535.1 L1503.9 535.1 L1503.9 510.2 L1495.9 515 L1495.9 510.5 Z" fill="#bdbdc1"/>
<circle cx="1519.6" cy="511.2" r="4.45" fill="none" stroke="#bdbdc1" stroke-width="3.2"/>
<path d="M1406.3 567.9 L1413.6 567.9 L1413.6 612 L1406.3 612 L1406.3 575.3 L1394.3999999999999 582.8 L1394.3999999999999 576.3 Z" fill="#5b6abf"/>
<path d="M1488.8 567.9 L1496.1 567.9 L1496.1 612 L1488.8 612 L1488.8 575.3 L1476.8999999999999 582.8 L1476.8999999999999 576.3 Z" fill="#5b6abf"/>
<path d="M1516.6 567.9 L1523.8999999999999 567.9 L1523.8999999999999 612 L1516.6 612 L1516.6 575.3 L1504.6999999999998 582.8 L1504.6999999999998 576.3 Z" fill="#5b6abf"/>
<path d="M1560.2 567.9 L1567.5 567.9 L1567.5 612 L1560.2 612 L1560.2 575.3 L1548.3 582.8 L1548.3 576.3 Z" fill="#5b6abf"/>
<ellipse cx="1439.4" cy="582.2" rx="13.65" ry="11.95" fill="none" stroke="#5b6abf" stroke-width="6.4"/>
<path d="M1453.05 581 L1453.05 595.5 C1453.05 605.5 1447.5 609.5 1439.6 609.5 C1432.5 609.5 1428.8 606.5 1426.8 602.5" fill="none" stroke="#5b6abf" stroke-width="6.4"/>
<ellipse cx="1593.5" cy="582.2" rx="13.65" ry="11.95" fill="none" stroke="#5b6abf" stroke-width="6.4"/>
<path d="M1607.1499999999999 581 L1607.1499999999999 595.5 C1607.1499999999999 605.5 1601.6 609.5 1593.6999999999998 609.5 C1586.6 609.5 1582.8999999999999 606.5 1580.8999999999999 602.5" fill="none" stroke="#5b6abf" stroke-width="6.4"/>
<circle cx="1466.3" cy="579.1" r="3.6" fill="#5b6abf"/><circle cx="1466.3" cy="602" r="3.6" fill="#5b6abf"/>
<circle cx="1538.5" cy="579.1" r="3.6" fill="#5b6abf"/><circle cx="1538.5" cy="602" r="3.6" fill="#5b6abf"/>
<path d="M1380.5 651.9 L1384.9 651.9 L1388.5 647.2 L1392.1 651.9 L1398.7 651.9 L1400.7 657.3 L1404.2 631.6 L1407.2 670.8 L1410.7 651.9 L1416.7 651.9 L1420.6000000000001 644.3 L1424.5 651.9 L1433.4 651.9 L1437.0 647.2 L1440.7 651.9 L1447.6 651.9 L1449.6 657.3 L1453.1 631.6 L1456.1 670.8 L1459.6 651.9 L1465.6 651.9 L1469.5 644.3 L1473.3999999999999 651.9 L1482.3 651.9 L1485.8999999999999 647.2 L1489.6 651.9 L1496.5 651.9 L1498.5 657.3 L1502.0 631.6 L1505.0 670.8 L1508.5 651.9 L1514.5 651.9 L1518.4 644.3 L1522.3 651.9 L1531.2 651.9 L1534.8 647.2 L1538.5 651.9 L1545.4 651.9 L1547.4 657.3 L1550.9 631.6 L1553.9 670.8 L1557.4 651.9 L1563.4 651.9 L1567.3000000000002 644.3 L1571.2 651.9 L1580.1000000000001 651.9 L1583.7 647.2 L1587.4 651.9 L1594.3 651.9 L1596.3 657.3 L1599.8 631.6 L1602.8 670.8 L1606.3 651.9 L1612.3 651.9 L1616.2 644.3 L1620.1 651.9 L1624.5 651.9" fill="none" stroke="url(#ecgg)" stroke-width="3.3" stroke-linejoin="round" stroke-linecap="butt"/>
<text x="1486.10" y="708.00" font-family="Liberation Sans" font-size="27.3" fill="#ff1a1a" textLength="32.50" lengthAdjust="spacing" >73</text>
<path d="M1888 73 L1888 65 Q1888 57 1895 57 Q1902 57 1902 65 L1902 73 L1904.5 75.5 L1885.5 75.5 Z M1893 78.5 Q1895 80 1897 78.5" stroke="#ced0d6" fill="none" stroke-width="1.5" stroke-linecap="round" stroke-linejoin="round" />
<circle cx="1903" cy="59" r="5" fill="#2b2d30"/><circle cx="1903" cy="59" r="3.8" fill="#548af7"/>
<g transform="translate(1895.5 117.4) scale(1.0)"><path d="M-11.5 8.8 C-12 4 -10.5 -1 -8.1 -2.9 C-6 -5.5 -3 -6.3 -1.5 -6 C1 -5.8 2 -5.3 3.6 -4.6 C5.5 -3.6 7 -3 8.1 -3.3 C9.5 -3.5 10.8 -4.5 10.5 -6 C10.3 -8 8.5 -9.2 7.1 -8.8 C6.5 -8.6 6.1 -8 6.1 -7.4 M10.5 -6 C11.5 -4.5 11.8 -2.5 11.2 -1 C10.5 1 8 2.2 6.4 3.3 C5.2 4.5 4.8 6.5 4.3 8.8 L3.5 8.8 C2 8.5 1 6.4 0.2 6.4 C-1 6.4 -1.5 8.5 -2.6 8.5 C-4 8.5 -4.8 6.4 -6 6.4 C-7.5 6.4 -8 8.5 -9.5 8.5 L-11.5 8.8 M-8.1 -2.9 C-7.5 0 -6.8 1.9 -5.5 2.4 C-4 3 -2 1.5 -0.5 -0.2" fill="none" stroke="#ced0d6" stroke-width="1.50" stroke-linejoin="round" stroke-linecap="round"/><circle cx="3.3" cy="-0.5" r="1.1" fill="#ced0d6"/></g>
<path d="M1888.5 177.5 L1887 177.5 Q1885.5 177.5 1885.5 176 L1885.5 159 Q1885.5 157.5 1887 157.5 L1897 157.5 Q1898.5 157.5 1898.5 159 L1898.5 166" stroke="#ced0d6" fill="none" stroke-width="1.4" stroke-linecap="round" stroke-linejoin="round" />
<rect x="1890" y="160.5" width="3" height="1.2" fill="#ced0d6" />
<path d="M1891 178 Q1891 169.5 1899 169.5 Q1907 169.5 1907 178 Z" stroke="#ced0d6" fill="none" stroke-width="1.4" stroke-linecap="round" stroke-linejoin="round" />
<rect x="1876" y="198" width="38" height="38" rx="7" fill="#3574f0"/>
<path d="M1889 227 L1888 227 Q1886.5 227 1886.5 225.5 L1886.5 210 Q1886.5 208.5 1888 208.5 L1896 208.5" stroke="#fff" fill="none" stroke-width="1.5" stroke-linecap="round" stroke-linejoin="round" />
<rect x="1891" y="211.5" width="3" height="1.2" fill="#fff" />
<rect x="1893" y="216.5" width="13.5" height="7.5" fill="none" stroke="#fff" stroke-width="1.5"/>
<rect x="1892" y="227.3" width="15.5" height="1.5" fill="#fff" />
<circle cx="1903.2" cy="209.1" r="4.6" fill="#5aa45f"/>
<path d="M1891 265 L1891 259 Q1891 257 1893 257 L1905 257 Q1907 257 1907 259 L1907 266 Q1907 268 1905 268 L1893 268 Q1891 268 1891 266 M1891 262 L1886 262 Q1884.5 262 1884.5 263.5 L1884.5 278.5 L1889 275 L1897 275" stroke="#ced0d6" fill="none" stroke-width="1.4" stroke-linecap="round" stroke-linejoin="round" />
<path d="M1902.5 268 Q1903 273 1908 274 Q1903 275 1902.5 280 Q1902 275 1897 274 Q1902 273 1902.5 268 Z" stroke="#ced0d6" fill="#ced0d6" stroke-width="0.8" stroke-linecap="round" stroke-linejoin="round" />
<rect x="19.0" y="988" width="8" height="8" rx="2" fill="#25324d" stroke="#548af7" stroke-width="1.4"/>
<text x="33.30" y="997.00" font-family="Liberation Sans" font-size="17" fill="#a8abb0" textLength="108.40" lengthAdjust="spacing" >MyWatchFace</text>
<path d="M155.85 987.7 L160.15 992 L155.85 996.3" stroke="#a8abb0" fill="none" stroke-width="1.3" stroke-linecap="round" stroke-linejoin="round" />
<rect x="174.0" y="988" width="8" height="8" rx="2" fill="#25324d" stroke="#548af7" stroke-width="1.4"/>
<text x="188.70" y="997.00" font-family="Liberation Sans" font-size="17" fill="#a8abb0" textLength="79.00" lengthAdjust="spacing" >watchface</text>
<path d="M280.35 987.7 L284.65 992 L280.35 996.3" stroke="#a8abb0" fill="none" stroke-width="1.3" stroke-linecap="round" stroke-linejoin="round" />
<text x="298.30" y="997.00" font-family="Liberation Sans" font-size="17" fill="#a8abb0" textLength="22.70" lengthAdjust="spacing" >src</text>
<path d="M334.85 987.7 L339.15 992 L334.85 996.3" stroke="#a8abb0" fill="none" stroke-width="1.3" stroke-linecap="round" stroke-linejoin="round" />
<rect x="353.4" y="988" width="8" height="8" rx="2" fill="#25324d" stroke="#548af7" stroke-width="1.4"/>
<text x="368.30" y="997.00" font-family="Liberation Sans" font-size="17" fill="#a8abb0" textLength="35.00" lengthAdjust="spacing" >main</text>
<path d="M417.35 987.7 L421.65 992 L417.35 996.3" stroke="#a8abb0" fill="none" stroke-width="1.3" stroke-linecap="round" stroke-linejoin="round" />
<text x="435.00" y="997.00" font-family="Liberation Sans" font-size="17" fill="#a8abb0" textLength="30.00" lengthAdjust="spacing" >java</text>
<path d="M478.35 987.7 L482.65 992 L478.35 996.3" stroke="#a8abb0" fill="none" stroke-width="1.3" stroke-linecap="round" stroke-linejoin="round" />
<text x="496.00" y="997.00" font-family="Liberation Sans" font-size="17" fill="#a8abb0" textLength="32.30" lengthAdjust="spacing" >com</text>
<path d="M541.85 987.7 L546.15 992 L541.85 996.3" stroke="#a8abb0" fill="none" stroke-width="1.3" stroke-linecap="round" stroke-linejoin="round" />
<text x="560.00" y="997.00" font-family="Liberation Sans" font-size="17" fill="#a8abb0" textLength="63.30" lengthAdjust="spacing" >example</text>
<path d="M636.35 987.7 L640.65 992 L636.35 996.3" stroke="#a8abb0" fill="none" stroke-width="1.3" stroke-linecap="round" stroke-linejoin="round" />
<text x="655.20" y="997.00" font-family="Liberation Sans" font-size="17" fill="#a8abb0" textLength="102.20" lengthAdjust="spacing" >mywatchface</text>
<path d="M771.35 987.7 L775.65 992 L771.35 996.3" stroke="#a8abb0" fill="none" stroke-width="1.3" stroke-linecap="round" stroke-linejoin="round" />
<path d="M792.0 985.0 L806.0 985.0 L799.0 992.0 L806.0 999.0 L792.0 999.0 Z" stroke="#b57fe8" fill="#2e2538" stroke-width="1.5" stroke-linecap="round" stroke-linejoin="round" />
<text x="814.50" y="997.00" font-family="Liberation Sans" font-size="17" fill="#a8abb0" textLength="158.80" lengthAdjust="spacing" >WatchFaceDrawer.kt</text>
<path d="M986.35 987.7 L990.65 992 L986.35 996.3" stroke="#a8abb0" fill="none" stroke-width="1.3" stroke-linecap="round" stroke-linejoin="round" />
<circle cx="1014" cy="991.5" r="8" fill="#25324d" stroke="#548af7" stroke-width="1.4"/>
<path d="M1017.2 989.3 A3.8 3.8 0 1 0 1017.2 993.7" stroke="#548af7" fill="none" stroke-width="1.4" stroke-linecap="round" stroke-linejoin="round" />
<path d="M1015.5 992.7 L1024.5 992.7 L1020.0 997.2 L1024.5 1001.7 L1015.5 1001.7 Z" stroke="#b57fe8" fill="#2e2538" stroke-width="1.3" stroke-linecap="round" stroke-linejoin="round" />
<text x="1029.50" y="997.00" font-family="Liberation Sans" font-size="17" fill="#a8abb0" textLength="139.50" lengthAdjust="spacing" >WatchFaceDrawer</text>
<path d="M1182.35 987.7 L1186.65 992 L1182.35 996.3" stroke="#a8abb0" fill="none" stroke-width="1.3" stroke-linecap="round" stroke-linejoin="round" />
<circle cx="1209.5" cy="991.5" r="8" fill="#4a2a2c" stroke="#e55b5b" stroke-width="1.3"/>
<text x="1204.50" y="995.50" font-family="Liberation Sans" font-size="12" fill="#e55b5b" textLength="10.00" lengthAdjust="spacing" >m</text>
<text x="1225.40" y="997.00" font-family="Liberation Sans" font-size="17" fill="#a8abb0" textLength="182.60" lengthAdjust="spacing" >applyCommonTypeface</text>
<text x="1551.50" y="997.00" font-family="Liberation Sans" font-size="17" fill="#a8abb0" textLength="43.00" lengthAdjust="spacing" >606:9</text>
<text x="1615.20" y="997.00" font-family="Liberation Sans" font-size="17" fill="#a8abb0" textLength="17.30" lengthAdjust="spacing" >LF</text>
<text x="1654.30" y="997.00" font-family="Liberation Sans" font-size="17" fill="#a8abb0" textLength="48.00" lengthAdjust="spacing" >UTF-8</text>
<path d="M1725.5 985 L1737 985 M1725.5 991 L1736 991 M1725.5 997 L1733 997 M1738.5 984 L1738.5 990 M1735.5 987 L1741.5 987" stroke="#a8abb0" fill="none" stroke-width="1.4" stroke-linecap="round" stroke-linejoin="round" />
<path d="M1772 999 L1768 999 Q1766.5 999 1766.5 997.5 L1766.5 986 Q1766.5 984.5 1768 984.5 L1775 984.5 L1777.5 987 L1777.5 990" stroke="#a8abb0" fill="none" stroke-width="1.3" stroke-linecap="round" stroke-linejoin="round" />
<path d="M1782.50 995.50 L1782.49 995.83 L1782.46 996.15 L1782.18 996.43 L1781.75 996.64 L1781.32 996.80 L1781.01 996.95 L1780.91 997.18 L1780.79 997.40 L1780.66 997.61 L1780.51 997.81 L1780.53 998.16 L1780.61 998.61 L1780.64 999.08 L1780.54 999.47 L1780.28 999.66 L1780.00 999.83 L1779.71 999.98 L1779.41 1000.12 L1779.03 1000.01 L1778.64 999.75 L1778.29 999.46 L1778.00 999.27 L1777.75 999.29 L1777.50 999.30 L1777.25 999.29 L1777.00 999.27 L1776.71 999.46 L1776.36 999.75 L1775.97 1000.01 L1775.59 1000.12 L1775.29 999.98 L1775.00 999.83 L1774.72 999.66 L1774.46 999.47 L1774.36 999.08 L1774.39 998.61 L1774.47 998.16 L1774.49 997.81 L1774.34 997.61 L1774.21 997.40 L1774.09 997.18 L1773.99 996.95 L1773.68 996.80 L1773.25 996.64 L1772.82 996.43 L1772.54 996.15 L1772.51 995.83 L1772.50 995.50 L1772.51 995.17 L1772.54 994.85 L1772.82 994.57 L1773.25 994.36 L1773.68 994.20 L1773.99 994.05 L1774.09 993.82 L1774.21 993.60 L1774.34 993.39 L1774.49 993.19 L1774.47 992.84 L1774.39 992.39 L1774.36 991.92 L1774.46 991.53 L1774.72 991.34 L1775.00 991.17 L1775.29 991.02 L1775.59 990.88 L1775.97 990.99 L1776.36 991.25 L1776.71 991.54 L1777.00 991.73 L1777.25 991.71 L1777.50 991.70 L1777.75 991.71 L1778.00 991.73 L1778.29 991.54 L1778.64 991.25 L1779.03 990.99 L1779.41 990.88 L1779.71 991.02 L1780.00 991.17 L1780.28 991.34 L1780.54 991.53 L1780.64 991.92 L1780.61 992.39 L1780.53 992.84 L1780.51 993.19 L1780.66 993.39 L1780.79 993.60 L1780.91 993.82 L1781.01 994.05 L1781.32 994.20 L1781.75 994.36 L1782.18 994.57 L1782.46 994.85 L1782.49 995.17 Z" fill="#2b2d30" stroke="#ced0d6" stroke-width="1.2" stroke-linejoin="round"/>
<circle cx="1777.5" cy="995.5" r="1.1" fill="#ced0d6"/>
<text x="1788.70" y="997.00" font-family="Liberation Sans" font-size="17" fill="#a8abb0" textLength="68.30" lengthAdjust="spacing" >4 spaces</text>
<rect x="1882.5" y="989.5" width="12" height="10" rx="2" fill="none" stroke="#a8abb0" stroke-width="1.4"/>
<rect x="1887.7" y="992.3" width="1.6" height="3.5" fill="#a8abb0" />
<path d="M1891.5 989.5 L1891.5 987.5 Q1891.5 984.5 1894.5 984.5 Q1897.5 984.5 1897.5 987.5 L1897.5 989" stroke="#a8abb0" fill="none" stroke-width="1.4" stroke-linecap="round" stroke-linejoin="round" />
</svg></div></body></html>
